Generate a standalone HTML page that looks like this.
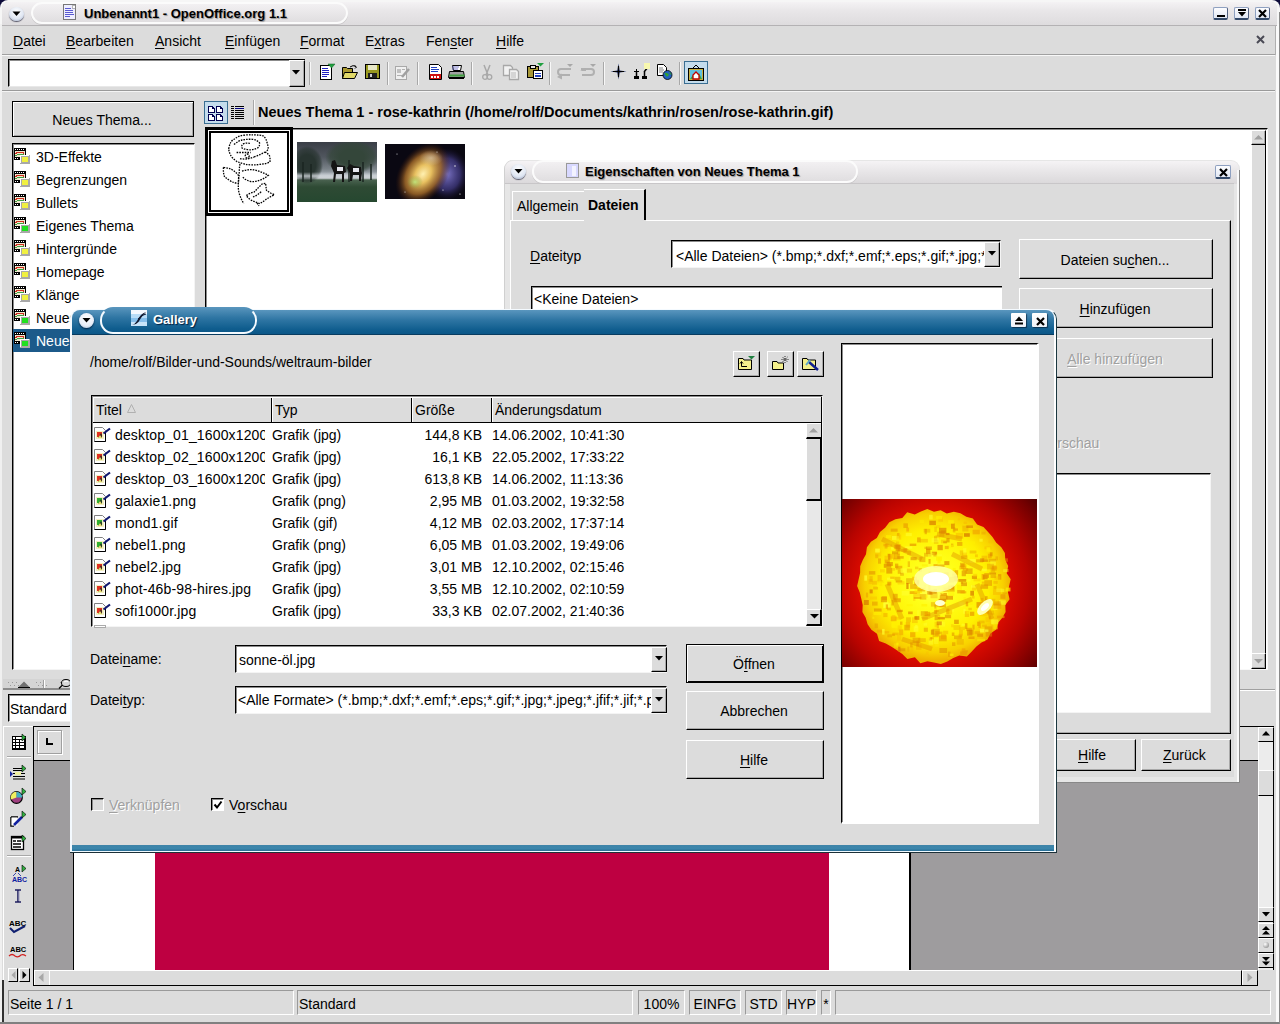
<!DOCTYPE html>
<html><head><meta charset="utf-8">
<style>
*{margin:0;padding:0;box-sizing:border-box}
html,body{width:1280px;height:1024px;overflow:hidden;background:#dcdcdc;position:relative;font-family:"Liberation Sans",sans-serif;font-size:14px;color:#000}
.a{position:absolute}
.t{position:absolute;white-space:pre}
svg{overflow:visible}
</style></head><body>
<div class="a" style="left:0px;top:0px;width:1280px;height:1024px;background:#0d0b3a"></div>
<div class="a" style="left:0px;top:0px;width:1280px;height:1024px;background:#f6f6f6;border-radius:8px 8px 0 0"></div>
<div class="a" style="left:2px;top:2px;width:1275px;height:1020px;background:#dcdcdc;border-radius:6px 6px 0 0"></div>
<div class="a" style="left:0px;top:24px;width:2px;height:1000px;background:#f0f0f0"></div>
<div class="a" style="left:1276px;top:24px;width:3px;height:1000px;background:#fafafa"></div>
<div class="a" style="left:0px;top:1022px;width:1280px;height:2px;background:#f0f0f0"></div>
<div class="a" style="left:2px;top:2px;width:1275px;height:23px;background:linear-gradient(#f4f2f4,#e8e6e8 40%,#dedcde);border-radius:6px 6px 0 0"></div>
<div class="a" style="left:2px;top:25px;width:1275px;height:1px;background:#b4b2b4"></div>
<div class="a" style="left:9px;top:7px;width:15px;height:14px;border-radius:50%;background:radial-gradient(circle at 50% 35%,#ffffff,#dfe6f2 60%,#8a9ab8);box-shadow:0 1px 1px #556"></div>
<svg class="a" style="left:11px;top:10px;;shape-rendering:auto" width="11" height="7" viewBox="0 0 11 7" shape-rendering="crispEdges"><path d="M1.5 1.5 L9.5 1.5 L5.5 6 Z" fill="#000"/></svg>
<div class="a" style="left:31px;top:2px;width:317px;height:22px;border-radius:11px;background:linear-gradient(#f2f0f2,#e0dee0);border:2px solid #fbfbfb;box-shadow:0 1px 0 #c8c6c8"></div>
<svg class="a" style="left:63px;top:4px;" width="14" height="17" viewBox="0 0 14 17" shape-rendering="crispEdges"><rect x="0.5" y="0.5" width="12" height="15" fill="#eeeeff" stroke="#777"/><rect x="9" y="1" width="3" height="3" fill="#fff" stroke="#888" stroke-width="0.6"/><path d="M2 4h6M2 6h8M2 8h8M2 10h9M2 12h5" stroke="#5a5ad0" stroke-width="1"/></svg>
<div class="t" style="left:84px;top:5.50px;font-size:13px;line-height:16px;font-weight:bold;color:#000;text-shadow:1px 1px 1px rgba(0,0,0,.35)">Unbenannt1 - OpenOffice.org 1.1</div>
<div class="a" style="left:1213px;top:7px;width:15px;height:13px;border-radius:2px;background:linear-gradient(#fdfdff,#e2e8f4);border:1px solid #8ea0c0;border-bottom:2px solid #344a6a;border-right-color:#506080"></div>
<div class="a" style="left:1217px;top:15px;width:8px;height:2px;background:#000"></div>
<div class="a" style="left:1234px;top:7px;width:15px;height:13px;border-radius:2px;background:linear-gradient(#fdfdff,#e2e8f4);border:1px solid #8ea0c0;border-bottom:2px solid #344a6a;border-right-color:#506080"></div>
<div class="a" style="left:1238px;top:9px;width:8px;height:2px;background:#000"></div>
<svg class="a" style="left:1238px;top:12px;;shape-rendering:auto" width="8" height="5" viewBox="0 0 8 5" shape-rendering="crispEdges"><path d="M0 0 L8 0 L4 4.5Z" fill="#000"/></svg>
<div class="a" style="left:1255px;top:7px;width:15px;height:13px;border-radius:2px;background:linear-gradient(#fdfdff,#e2e8f4);border:1px solid #8ea0c0;border-bottom:2px solid #344a6a;border-right-color:#506080"></div>
<svg class="a" style="left:1258px;top:9px;;shape-rendering:auto" width="9" height="9" viewBox="0 0 9 9" shape-rendering="crispEdges"><path d="M1 1 L8 8 M8 1 L1 8" stroke="#000" stroke-width="2.2"/></svg>
<div class="a" style="left:2px;top:54px;width:1273px;height:1px;background:#a0a0a0"></div>
<div class="a" style="left:2px;top:55px;width:1273px;height:1px;background:#f8f8f8"></div>
<div class="a" style="left:1275px;top:26px;width:1px;height:29px;background:#b0b0b0"></div>
<div class="t" style="left:13px;top:32.15px;font-size:14px;line-height:18px;font-weight:normal;color:#000;"><span style="text-decoration:underline;text-decoration-thickness:1px;text-underline-offset:2px">D</span>atei</div>
<div class="t" style="left:66px;top:32.15px;font-size:14px;line-height:18px;font-weight:normal;color:#000;"><span style="text-decoration:underline;text-decoration-thickness:1px;text-underline-offset:2px">B</span>earbeiten</div>
<div class="t" style="left:155px;top:32.15px;font-size:14px;line-height:18px;font-weight:normal;color:#000;"><span style="text-decoration:underline;text-decoration-thickness:1px;text-underline-offset:2px">A</span>nsicht</div>
<div class="t" style="left:225px;top:32.15px;font-size:14px;line-height:18px;font-weight:normal;color:#000;"><span style="text-decoration:underline;text-decoration-thickness:1px;text-underline-offset:2px">E</span>infügen</div>
<div class="t" style="left:300px;top:32.15px;font-size:14px;line-height:18px;font-weight:normal;color:#000;"><span style="text-decoration:underline;text-decoration-thickness:1px;text-underline-offset:2px">F</span>ormat</div>
<div class="t" style="left:365px;top:32.15px;font-size:14px;line-height:18px;font-weight:normal;color:#000;">E<span style="text-decoration:underline;text-decoration-thickness:1px;text-underline-offset:2px">x</span>tras</div>
<div class="t" style="left:426px;top:32.15px;font-size:14px;line-height:18px;font-weight:normal;color:#000;">Fen<span style="text-decoration:underline;text-decoration-thickness:1px;text-underline-offset:2px">s</span>ter</div>
<div class="t" style="left:496px;top:32.15px;font-size:14px;line-height:18px;font-weight:normal;color:#000;"><span style="text-decoration:underline;text-decoration-thickness:1px;text-underline-offset:2px">H</span>ilfe</div>
<svg class="a" style="left:1256px;top:35px;;shape-rendering:auto" width="9" height="9" viewBox="0 0 9 9" shape-rendering="crispEdges"><path d="M1 1 L8 8 M8 1 L1 8" stroke="#4a4a55" stroke-width="2"/></svg>
<div class="a" style="left:2px;top:90px;width:1273px;height:1px;background:#9a9a9a"></div>
<div class="a" style="left:2px;top:91px;width:1273px;height:1px;background:#f4f4f4"></div>
<div class="a" style="left:8px;top:59px;width:297px;height:28px;background:#fff;border-top:1px solid #000;border-left:1px solid #000;box-shadow:inset 1px 1px 0 #8c8c8c;border-bottom:1px solid #e8e8e8"></div>
<div class="a" style="left:289px;top:60px;width:16px;height:27px;background:#dcdcdc;border-left:1px solid #fff;border-top:1px solid #fff;border-right:1px solid #000;border-bottom:1px solid #000;box-shadow:inset -1px -1px 0 #a8a8a8"></div>
<svg class="a" style="left:292px;top:70px;;shape-rendering:auto" width="8" height="5" viewBox="0 0 8 5" shape-rendering="crispEdges"><path d="M0 0 L8 0 L4 4.5Z" fill="#000"/></svg>
<div class="a" style="left:309px;top:62px;width:1px;height:23px;background:#a8a8a8"></div>
<div class="a" style="left:310px;top:62px;width:1px;height:23px;background:#f8f8f8"></div>
<div class="a" style="left:387px;top:62px;width:1px;height:23px;background:#a8a8a8"></div>
<div class="a" style="left:388px;top:62px;width:1px;height:23px;background:#f8f8f8"></div>
<div class="a" style="left:417px;top:62px;width:1px;height:23px;background:#a8a8a8"></div>
<div class="a" style="left:418px;top:62px;width:1px;height:23px;background:#f8f8f8"></div>
<div class="a" style="left:471px;top:62px;width:1px;height:23px;background:#a8a8a8"></div>
<div class="a" style="left:472px;top:62px;width:1px;height:23px;background:#f8f8f8"></div>
<div class="a" style="left:549px;top:62px;width:1px;height:23px;background:#a8a8a8"></div>
<div class="a" style="left:550px;top:62px;width:1px;height:23px;background:#f8f8f8"></div>
<div class="a" style="left:603px;top:62px;width:1px;height:23px;background:#a8a8a8"></div>
<div class="a" style="left:604px;top:62px;width:1px;height:23px;background:#f8f8f8"></div>
<div class="a" style="left:679px;top:62px;width:1px;height:23px;background:#a8a8a8"></div>
<div class="a" style="left:680px;top:62px;width:1px;height:23px;background:#f8f8f8"></div>
<svg class="a" style="left:319px;top:63px;;shape-rendering:auto" width="18" height="18" viewBox="0 0 18 18" shape-rendering="crispEdges"><rect x="1.5" y="2.5" width="11" height="14" fill="#fff" stroke="#000"/><g fill="#2020c0"><rect x="3" y="5" width="6" height="1"/><rect x="3" y="7" width="7" height="1"/><rect x="3" y="9" width="7" height="1"/><rect x="3" y="11" width="7" height="1"/><rect x="3" y="13" width="5" height="1"/></g><path d="M9 1 L16 1 L12.5 5Z" fill="#20a040" stroke="#106020" stroke-width=".5"/></svg>
<svg class="a" style="left:341px;top:64px;;shape-rendering:auto" width="18" height="18" viewBox="0 0 18 18" shape-rendering="crispEdges"><path d="M1.5 3.5 L5.5 3.5 L6.5 4.5 L11.5 4.5 L11.5 14.5 L1.5 14.5Z" fill="#a89830" stroke="#000"/><path d="M3.5 8.5 L16.5 8.5 L13.5 14.5 L1.5 14.5Z" fill="#e0d868" stroke="#000"/><path d="M9 3 Q12 0.5 15 2.5" stroke="#000" fill="none"/><path d="M13.5 1.5 L15.5 3 L14 4.5" stroke="#000" fill="none"/></svg>
<svg class="a" style="left:365px;top:64px;" width="18" height="18" viewBox="0 0 18 18" shape-rendering="crispEdges"><rect x="0.5" y="0.5" width="14" height="14" fill="#989820" stroke="#000"/><rect x="3" y="1" width="9" height="5" fill="#e8e8c8"/><rect x="3" y="9" width="9" height="5" fill="#202020"/><rect x="5" y="10" width="2" height="3" fill="#d0d0d0"/></svg>
<svg class="a" style="left:394px;top:64px;;shape-rendering:auto" width="18" height="18" viewBox="0 0 18 18" shape-rendering="crispEdges"><rect x="1.5" y="2.5" width="11" height="13" fill="#f0f0f0" stroke="#a8a8a8"/><rect x="3" y="5" width="4" height="4" fill="#c0c0c0"/><rect x="8" y="5" width="3" height="1" fill="#b0b0b0"/><rect x="3" y="11" width="7" height="1" fill="#b0b0b0"/><path d="M8 13 L15 5" stroke="#a0a0a0" stroke-width="2.5"/></svg>
<svg class="a" style="left:428px;top:63px;;shape-rendering:auto" width="18" height="18" viewBox="0 0 18 18" shape-rendering="crispEdges"><path d="M1.5 1.5 L10.5 1.5 L13.5 4.5 L13.5 16.5 L1.5 16.5Z" fill="#fff" stroke="#000"/><g fill="#2040c0"><rect x="3" y="4" width="6" height="1"/><rect x="3" y="6" width="8" height="1"/><rect x="3" y="8" width="7" height="1"/></g><rect x="2" y="11" width="11" height="5" fill="#d01010"/><g fill="#fff"><rect x="3" y="13" width="2" height="2"/><rect x="6" y="13" width="2" height="2"/><rect x="9" y="13" width="2" height="2"/></g></svg>
<svg class="a" style="left:448px;top:64px;;shape-rendering:auto" width="18" height="18" viewBox="0 0 18 18" shape-rendering="crispEdges"><path d="M4.5 1.5 L13.5 1.5 L12.5 6.5 L5.5 6.5Z" fill="#fff" stroke="#000"/><path d="M4 3h7M4 5h6" stroke="#6060c0" stroke-width=".8"/><path d="M1.5 7.5 L15.5 7.5 L16.5 13.5 L0.5 13.5Z" fill="#a0a0a0" stroke="#000"/><rect x="1.5" y="10.5" width="15" height="2" fill="#40a040"/><path d="M1 14.5 H16" stroke="#000"/></svg>
<svg class="a" style="left:481px;top:64px;;shape-rendering:auto" width="18" height="18" viewBox="0 0 18 18" shape-rendering="crispEdges"><path d="M3 1 L7 11 M9 1 L5 11" stroke="#a8a8a8" stroke-width="1.5"/><circle cx="4" cy="13" r="2.3" fill="none" stroke="#a8a8a8" stroke-width="1.3"/><circle cx="8.5" cy="13" r="2.3" fill="none" stroke="#a8a8a8" stroke-width="1.3"/></svg>
<svg class="a" style="left:502px;top:64px;;shape-rendering:auto" width="18" height="18" viewBox="0 0 18 18" shape-rendering="crispEdges"><path d="M1.5 1.5 H8.5 L10.5 3.5 V11.5 H1.5Z" fill="#f2f2f2" stroke="#a8a8a8" stroke-width="1.3"/><path d="M7.5 5.5 H14.5 L16.5 7.5 V15.5 H7.5Z" fill="#f2f2f2" stroke="#a8a8a8" stroke-width="1.3"/><path d="M9 9h5M9 11h5M9 13h5" stroke="#b8b8b8"/></svg>
<svg class="a" style="left:526px;top:62px;;shape-rendering:auto" width="18" height="18" viewBox="0 0 18 18" shape-rendering="crispEdges"><rect x="1.5" y="4.5" width="11" height="11" fill="#a89838" stroke="#000"/><rect x="4.5" y="3.5" width="5" height="3" fill="#e8e8e8" stroke="#000"/><rect x="7.5" y="8.5" width="9" height="8" fill="#fff" stroke="#000"/><rect x="9" y="11" width="6" height="1" fill="#2040c0"/><rect x="9" y="13" width="6" height="2" fill="#2040c0"/><path d="M11 1 L18 1 L14.5 4.5Z" fill="#20a040"/></svg>
<svg class="a" style="left:556px;top:63px;;shape-rendering:auto" width="18" height="18" viewBox="0 0 18 18" shape-rendering="crispEdges"><path d="M15 6 L5 6 Q2 6 2 9 Q2 12 5 12 L14 12" stroke="#b0b0b0" stroke-width="2" fill="none"/><path d="M1 14 L6 10.5 L6 16.5Z" fill="#b0b0b0"/><path d="M11 1 L17 1 L14 4Z" fill="#a8a8a8"/></svg>
<svg class="a" style="left:579px;top:63px;;shape-rendering:auto" width="18" height="18" viewBox="0 0 18 18" shape-rendering="crispEdges"><path d="M2 6 L12 6 Q15 6 15 9 Q15 12 12 12 L3 12" stroke="#b0b0b0" stroke-width="2" fill="none"/><path d="M1 8 L7 8 L7 5Z" fill="#b0b0b0"/><path d="M11 1 L17 1 L14 4Z" fill="#a8a8a8"/></svg>
<svg class="a" style="left:610px;top:63px;;shape-rendering:auto" width="18" height="18" viewBox="0 0 18 18" shape-rendering="crispEdges"><path d="M8.5 0.5 L9.6 7.4 L16.5 8.5 L9.6 9.6 L8.5 16.5 L7.4 9.6 L0.5 8.5 L7.4 7.4Z" fill="#102060"/><path d="M8.5 3 V14 M3 8.5 H14" stroke="#000" stroke-width="1.2"/></svg>
<svg class="a" style="left:633px;top:63px;;shape-rendering:auto" width="18" height="18" viewBox="0 0 18 18" shape-rendering="crispEdges"><rect x="1" y="13" width="5" height="3" fill="#000"/><rect x="9" y="13" width="5" height="3" fill="#000"/><path d="M3.5 13 V9 M11.5 13 V8 M11 9 L16 3" stroke="#000" stroke-width="1.5"/><rect x="11" y="0" width="6" height="6" fill="#f8f8b0"/><path d="M1 8.5h5M3.5 6v5" stroke="#000"/></svg>
<svg class="a" style="left:656px;top:63px;;shape-rendering:auto" width="18" height="18" viewBox="0 0 18 18" shape-rendering="crispEdges"><path d="M1.5 1.5 H7.5 L10.5 4.5 V12.5 H1.5Z" fill="#fff" stroke="#000"/><path d="M3 5h4M3 7h5M3 9h4" stroke="#666" stroke-width=".8"/><circle cx="11.5" cy="12" r="4.5" fill="#2060c0" stroke="#000" stroke-width="0.8"/><path d="M8.5 10 Q11 9 13 11.5 Q12 14.5 10 13Z M13 8.5 Q15.5 10 15.5 12 L14 11Z" fill="#30a030"/></svg>
<div class="a" style="left:684px;top:61px;width:24px;height:23px;background:#c4dcec;border:1px solid #3a6e92"></div>
<svg class="a" style="left:688px;top:64px;;shape-rendering:auto" width="18" height="18" viewBox="0 0 18 18" shape-rendering="crispEdges"><rect x="0.5" y="4.5" width="15" height="12" fill="#c8b040" stroke="#000"/><rect x="2" y="6" width="12" height="9" fill="#60c0e0"/><path d="M2 15 L5 11 L8 13 L11 9 L14 15Z" fill="#40a040"/><path d="M5 15 L5 11 L8 8 L11 11 L11 15Z" fill="#fff" stroke="#c00000" stroke-width="1.3"/><path d="M5 4 L8 1 L11 4" stroke="#000" fill="none"/></svg>
<div class="a" style="left:12px;top:101px;width:182px;height:36px;background:#dcdcdc;border:1px solid #000;box-shadow:inset 1px 1px 0 #fff,inset -1px -1px 0 #a8a8a8"></div>
<div class="t" style="left:102px;top:111.15px;font-size:14px;line-height:18px;font-weight:normal;color:#000;transform:translateX(-50%);">Neues Thema...</div>
<div class="a" style="left:12px;top:143px;width:183px;height:527px;background:#fff;border-top:1px solid #000;border-left:1px solid #000;box-shadow:inset 1px 1px 0 #8c8c8c;border-bottom:1px solid #f4f4f4;border-right:1px solid #f4f4f4"></div>
<div class="t" style="left:36px;top:148.15px;font-size:14px;line-height:18px;font-weight:normal;color:#000;">3D-Effekte</div>
<svg class="a" style="left:14px;top:148px;" width="17" height="17" viewBox="0 0 17 17" shape-rendering="crispEdges"><rect x="0" y="0" width="12" height="12" fill="#000"/><g fill="#fff"><rect x="1" y="1" width="1" height="1"/><rect x="3" y="1" width="1" height="1"/><rect x="5" y="1" width="1" height="1"/><rect x="7" y="1" width="1" height="1"/><rect x="9" y="1" width="1" height="1"/><rect x="1" y="10" width="1" height="1"/><rect x="3" y="10" width="1" height="1"/></g><rect x="1" y="3" width="10" height="6" fill="#f0e8d0"/><path d="M1 6 Q5 3 10 5" stroke="#d03020" stroke-width="1.3" fill="none"/><path d="M1 8 Q5 5 10 7" stroke="#40a040" stroke-width="1" fill="none"/><rect x="6" y="7" width="10" height="9" fill="#a8a8a8"/><rect x="6" y="7" width="9" height="1" fill="#fff"/><rect x="6" y="7" width="1" height="8" fill="#fff"/><rect x="8" y="9" width="6" height="5" fill="#f0f040"/></svg>
<div class="t" style="left:36px;top:171.15px;font-size:14px;line-height:18px;font-weight:normal;color:#000;">Begrenzungen</div>
<svg class="a" style="left:14px;top:171px;" width="17" height="17" viewBox="0 0 17 17" shape-rendering="crispEdges"><rect x="0" y="0" width="12" height="12" fill="#000"/><g fill="#fff"><rect x="1" y="1" width="1" height="1"/><rect x="3" y="1" width="1" height="1"/><rect x="5" y="1" width="1" height="1"/><rect x="7" y="1" width="1" height="1"/><rect x="9" y="1" width="1" height="1"/><rect x="1" y="10" width="1" height="1"/><rect x="3" y="10" width="1" height="1"/></g><rect x="1" y="3" width="10" height="6" fill="#f0e8d0"/><path d="M1 6 Q5 3 10 5" stroke="#d03020" stroke-width="1.3" fill="none"/><path d="M1 8 Q5 5 10 7" stroke="#40a040" stroke-width="1" fill="none"/><rect x="6" y="7" width="10" height="9" fill="#a8a8a8"/><rect x="6" y="7" width="9" height="1" fill="#fff"/><rect x="6" y="7" width="1" height="8" fill="#fff"/><rect x="8" y="9" width="6" height="5" fill="#f0f040"/></svg>
<div class="t" style="left:36px;top:194.15px;font-size:14px;line-height:18px;font-weight:normal;color:#000;">Bullets</div>
<svg class="a" style="left:14px;top:194px;" width="17" height="17" viewBox="0 0 17 17" shape-rendering="crispEdges"><rect x="0" y="0" width="12" height="12" fill="#000"/><g fill="#fff"><rect x="1" y="1" width="1" height="1"/><rect x="3" y="1" width="1" height="1"/><rect x="5" y="1" width="1" height="1"/><rect x="7" y="1" width="1" height="1"/><rect x="9" y="1" width="1" height="1"/><rect x="1" y="10" width="1" height="1"/><rect x="3" y="10" width="1" height="1"/></g><rect x="1" y="3" width="10" height="6" fill="#f0e8d0"/><path d="M1 6 Q5 3 10 5" stroke="#d03020" stroke-width="1.3" fill="none"/><path d="M1 8 Q5 5 10 7" stroke="#40a040" stroke-width="1" fill="none"/><rect x="6" y="7" width="10" height="9" fill="#a8a8a8"/><rect x="6" y="7" width="9" height="1" fill="#fff"/><rect x="6" y="7" width="1" height="8" fill="#fff"/><rect x="8" y="9" width="6" height="5" fill="#f0f040"/></svg>
<div class="t" style="left:36px;top:217.15px;font-size:14px;line-height:18px;font-weight:normal;color:#000;">Eigenes Thema</div>
<svg class="a" style="left:14px;top:217px;" width="17" height="17" viewBox="0 0 17 17" shape-rendering="crispEdges"><rect x="0" y="0" width="12" height="12" fill="#000"/><g fill="#fff"><rect x="1" y="1" width="1" height="1"/><rect x="3" y="1" width="1" height="1"/><rect x="5" y="1" width="1" height="1"/><rect x="7" y="1" width="1" height="1"/><rect x="9" y="1" width="1" height="1"/><rect x="1" y="10" width="1" height="1"/><rect x="3" y="10" width="1" height="1"/></g><rect x="1" y="3" width="10" height="6" fill="#f0e8d0"/><path d="M1 6 Q5 3 10 5" stroke="#d03020" stroke-width="1.3" fill="none"/><path d="M1 8 Q5 5 10 7" stroke="#40a040" stroke-width="1" fill="none"/><rect x="6" y="7" width="10" height="9" fill="#a8a8a8"/><rect x="6" y="7" width="9" height="1" fill="#fff"/><rect x="6" y="7" width="1" height="8" fill="#fff"/><rect x="8" y="9" width="6" height="5" fill="#20e020"/></svg>
<div class="t" style="left:36px;top:240.15px;font-size:14px;line-height:18px;font-weight:normal;color:#000;">Hintergründe</div>
<svg class="a" style="left:14px;top:240px;" width="17" height="17" viewBox="0 0 17 17" shape-rendering="crispEdges"><rect x="0" y="0" width="12" height="12" fill="#000"/><g fill="#fff"><rect x="1" y="1" width="1" height="1"/><rect x="3" y="1" width="1" height="1"/><rect x="5" y="1" width="1" height="1"/><rect x="7" y="1" width="1" height="1"/><rect x="9" y="1" width="1" height="1"/><rect x="1" y="10" width="1" height="1"/><rect x="3" y="10" width="1" height="1"/></g><rect x="1" y="3" width="10" height="6" fill="#f0e8d0"/><path d="M1 6 Q5 3 10 5" stroke="#d03020" stroke-width="1.3" fill="none"/><path d="M1 8 Q5 5 10 7" stroke="#40a040" stroke-width="1" fill="none"/><rect x="6" y="7" width="10" height="9" fill="#a8a8a8"/><rect x="6" y="7" width="9" height="1" fill="#fff"/><rect x="6" y="7" width="1" height="8" fill="#fff"/><rect x="8" y="9" width="6" height="5" fill="#f0f040"/></svg>
<div class="t" style="left:36px;top:263.15px;font-size:14px;line-height:18px;font-weight:normal;color:#000;">Homepage</div>
<svg class="a" style="left:14px;top:263px;" width="17" height="17" viewBox="0 0 17 17" shape-rendering="crispEdges"><rect x="0" y="0" width="12" height="12" fill="#000"/><g fill="#fff"><rect x="1" y="1" width="1" height="1"/><rect x="3" y="1" width="1" height="1"/><rect x="5" y="1" width="1" height="1"/><rect x="7" y="1" width="1" height="1"/><rect x="9" y="1" width="1" height="1"/><rect x="1" y="10" width="1" height="1"/><rect x="3" y="10" width="1" height="1"/></g><rect x="1" y="3" width="10" height="6" fill="#f0e8d0"/><path d="M1 6 Q5 3 10 5" stroke="#d03020" stroke-width="1.3" fill="none"/><path d="M1 8 Q5 5 10 7" stroke="#40a040" stroke-width="1" fill="none"/><rect x="6" y="7" width="10" height="9" fill="#a8a8a8"/><rect x="6" y="7" width="9" height="1" fill="#fff"/><rect x="6" y="7" width="1" height="8" fill="#fff"/><rect x="8" y="9" width="6" height="5" fill="#f0f040"/></svg>
<div class="t" style="left:36px;top:286.15px;font-size:14px;line-height:18px;font-weight:normal;color:#000;">Klänge</div>
<svg class="a" style="left:14px;top:286px;" width="17" height="17" viewBox="0 0 17 17" shape-rendering="crispEdges"><rect x="0" y="0" width="12" height="12" fill="#000"/><g fill="#fff"><rect x="1" y="1" width="1" height="1"/><rect x="3" y="1" width="1" height="1"/><rect x="5" y="1" width="1" height="1"/><rect x="7" y="1" width="1" height="1"/><rect x="9" y="1" width="1" height="1"/><rect x="1" y="10" width="1" height="1"/><rect x="3" y="10" width="1" height="1"/></g><rect x="1" y="3" width="10" height="6" fill="#f0e8d0"/><path d="M1 6 Q5 3 10 5" stroke="#d03020" stroke-width="1.3" fill="none"/><path d="M1 8 Q5 5 10 7" stroke="#40a040" stroke-width="1" fill="none"/><rect x="6" y="7" width="10" height="9" fill="#a8a8a8"/><rect x="6" y="7" width="9" height="1" fill="#fff"/><rect x="6" y="7" width="1" height="8" fill="#fff"/><rect x="8" y="9" width="6" height="5" fill="#f0f040"/></svg>
<div class="t" style="left:36px;top:309.15px;font-size:14px;line-height:18px;font-weight:normal;color:#000;">Neues Thema</div>
<svg class="a" style="left:14px;top:309px;" width="17" height="17" viewBox="0 0 17 17" shape-rendering="crispEdges"><rect x="0" y="0" width="12" height="12" fill="#000"/><g fill="#fff"><rect x="1" y="1" width="1" height="1"/><rect x="3" y="1" width="1" height="1"/><rect x="5" y="1" width="1" height="1"/><rect x="7" y="1" width="1" height="1"/><rect x="9" y="1" width="1" height="1"/><rect x="1" y="10" width="1" height="1"/><rect x="3" y="10" width="1" height="1"/></g><rect x="1" y="3" width="10" height="6" fill="#f0e8d0"/><path d="M1 6 Q5 3 10 5" stroke="#d03020" stroke-width="1.3" fill="none"/><path d="M1 8 Q5 5 10 7" stroke="#40a040" stroke-width="1" fill="none"/><rect x="6" y="7" width="10" height="9" fill="#a8a8a8"/><rect x="6" y="7" width="9" height="1" fill="#fff"/><rect x="6" y="7" width="1" height="8" fill="#fff"/><rect x="8" y="9" width="6" height="5" fill="#20e020"/></svg>
<div class="a" style="left:13px;top:329px;width:57px;height:23px;background:#1c5a8a"></div>
<div class="t" style="left:36px;top:332.15px;font-size:14px;line-height:18px;font-weight:normal;color:#fff;">Neues Thema 1</div>
<svg class="a" style="left:14px;top:332px;" width="17" height="17" viewBox="0 0 17 17" shape-rendering="crispEdges"><rect x="0" y="0" width="12" height="12" fill="#000"/><g fill="#fff"><rect x="1" y="1" width="1" height="1"/><rect x="3" y="1" width="1" height="1"/><rect x="5" y="1" width="1" height="1"/><rect x="7" y="1" width="1" height="1"/><rect x="9" y="1" width="1" height="1"/><rect x="1" y="10" width="1" height="1"/><rect x="3" y="10" width="1" height="1"/></g><rect x="1" y="3" width="10" height="6" fill="#f0e8d0"/><path d="M1 6 Q5 3 10 5" stroke="#d03020" stroke-width="1.3" fill="none"/><path d="M1 8 Q5 5 10 7" stroke="#40a040" stroke-width="1" fill="none"/><rect x="6" y="7" width="10" height="9" fill="#a8a8a8"/><rect x="6" y="7" width="9" height="1" fill="#fff"/><rect x="6" y="7" width="1" height="8" fill="#fff"/><rect x="8" y="9" width="6" height="5" fill="#20e020"/></svg>
<div class="a" style="left:204px;top:101px;width:24px;height:23px;background:#c4dcec;border:1px solid #3a6e92"></div>
<svg class="a" style="left:207px;top:105px;" width="17" height="16" viewBox="0 0 17 16" shape-rendering="crispEdges"><path d="M1.5 1.5 H5.5 L7.5 3.5 V7.5 H1.5 Z" fill="#fff" stroke="#000050"/><path d="M5.5 1.5 V3.5 H7.5" fill="none" stroke="#000050"/><path d="M9.5 1.5 H13.5 L15.5 3.5 V7.5 H9.5 Z" fill="#fff" stroke="#000050"/><path d="M13.5 1.5 V3.5 H15.5" fill="none" stroke="#000050"/><path d="M1.5 9.5 H5.5 L7.5 11.5 V15.5 H1.5 Z" fill="#fff" stroke="#000050"/><path d="M5.5 9.5 V11.5 H7.5" fill="none" stroke="#000050"/><path d="M9.5 9.5 H13.5 L15.5 11.5 V15.5 H9.5 Z" fill="#fff" stroke="#000050"/><path d="M13.5 9.5 V11.5 H15.5" fill="none" stroke="#000050"/></svg>
<svg class="a" style="left:230px;top:105px;" width="15" height="15" viewBox="0 0 15 15" shape-rendering="crispEdges"><rect x="1" y="1" width="3" height="1" fill="#000"/><rect x="5" y="1" width="9" height="1" fill="#000"/><rect x="1" y="3" width="3" height="1" fill="#000"/><rect x="5" y="3" width="9" height="1" fill="#000080"/><rect x="1" y="5" width="3" height="1" fill="#000"/><rect x="5" y="5" width="9" height="1" fill="#000"/><rect x="1" y="7" width="3" height="1" fill="#000"/><rect x="5" y="7" width="9" height="1" fill="#000"/><rect x="1" y="9" width="3" height="1" fill="#000"/><rect x="5" y="9" width="9" height="1" fill="#000"/><rect x="1" y="11" width="3" height="1" fill="#000"/><rect x="5" y="11" width="9" height="1" fill="#000"/><rect x="1" y="13" width="3" height="1" fill="#000"/><rect x="5" y="13" width="9" height="1" fill="#000"/></svg>
<div class="a" style="left:253px;top:100px;width:1px;height:25px;background:#a8a8a8"></div>
<div class="a" style="left:254px;top:100px;width:1px;height:25px;background:#fafafa"></div>
<div class="t" style="left:258px;top:102.98px;font-size:14.5px;line-height:18px;font-weight:bold;color:#000;">Neues Thema 1 - rose-kathrin (/home/rolf/Documents/kathrin/rosen/rose-kathrin.gif)</div>
<div class="a" style="left:205px;top:128px;width:1063px;height:542px;background:#fff;border-top:1px solid #000;border-left:1px solid #000;box-shadow:inset 1px 1px 0 #8c8c8c;border-bottom:1px solid #f8f8f8;border-right:1px solid #f8f8f8"></div>
<div class="a" style="left:1251px;top:130px;width:15px;height:539px;background:#dcdcdc;border-left:1px solid #fff;border-right:1px solid #000"></div>
<div class="a" style="left:1251px;top:130px;width:15px;height:15px;background:#dcdcdc;border-top:1px solid #fff;border-left:1px solid #fff;border-bottom:1px solid #000;border-right:1px solid #000;box-shadow:inset -1px -1px 0 #a8a8a8"></div>
<svg class="a" style="left:1254px;top:135px;;shape-rendering:auto" width="9" height="5" viewBox="0 0 9 5" shape-rendering="crispEdges"><path d="M0 4.5 L9 4.5 L4.5 0Z" fill="#a0a0a0"/></svg>
<div class="a" style="left:1251px;top:653px;width:15px;height:16px;background:#dcdcdc;border-top:1px solid #fff;border-left:1px solid #fff;border-bottom:1px solid #000;border-right:1px solid #000;box-shadow:inset -1px -1px 0 #a8a8a8"></div>
<svg class="a" style="left:1254px;top:659px;;shape-rendering:auto" width="9" height="5" viewBox="0 0 9 5" shape-rendering="crispEdges"><path d="M0 0 L9 0 L4.5 4.5Z" fill="#a0a0a0"/></svg>
<div class="a" style="left:205px;top:127px;width:88px;height:89px;border:3px solid #000;background:#fff"></div>
<div class="a" style="left:209px;top:131px;width:80px;height:81px;border:2px solid #000;background:#fff"></div>
<svg class="a" style="left:205px;top:127px;;shape-rendering:auto" width="90" height="90" viewBox="0 0 90 90" shape-rendering="crispEdges"><g fill="none" stroke="#000" stroke-width="1.3" stroke-dasharray="1.6 1.1"><path d="M23.7 22 Q25 14 29 12.3 Q33 9 37.8 8.3 Q44 7.5 49 7.9 Q55 8 58 8.8 Q61 11 61.5 14 Q63 18 63.3 22 L60.6 25.5 Q64 27 65 30 L65 35 Q61 37 57 37 Q52 38 47.5 37.8 Q43 38 39.5 37 Q35 36 31.6 34.3 Q27 31 25.5 28 Q24 25 23.7 22Z"/><path d="M29 17.6 Q33 14 37 13 Q42 12 47.5 12.3 Q52 13 54.5 15.8 Q55 19 52.7 21 Q48 23 44 22.8 Q40 22.5 37 21 Q36 18 38.7 16.7 Q42 15.5 45.7 16.7"/><path d="M31.6 25.5 L45.7 25.5 M35 31.6 Q42 33 49 30 M49 30 Q55 28 60 25"/><circle cx="42.2" cy="29" r="2"/><path d="M18.5 40.4 Q23 41 26.4 42.2 Q31 45 33.4 48.3 Q34 53 33.4 56.2 Q29 56 26.4 54.5 Q22 52 19.3 49.2 Q18 45 18.5 40.4Z"/><path d="M37 44 Q44 42 50 43 Q57 45 63.3 48.3 Q60 51 56.2 52.7 Q51 55 45.7 54.5 Q40 53 37.8 50"/><path d="M35 37 Q34 42 34.3 47.5 Q33 53 33.4 58 Q33 62 34.3 66.8 Q36 72 38.7 76.5"/><path d="M41.3 68.5 Q45 66 49.2 65 Q53 61 57 57 L60.6 56.2 Q61 60 61.5 63.3 Q65 66 69.4 67.7 Q65 70 61.5 72 Q58 75 54.5 76.5 Q50 75 45.7 73 Q43 71 41.3 68.5Z"/><path d="M48 70 Q53 68 57 64 M52 76 L54 79"/></g></svg>
<div class="a" style="left:3px;top:679px;width:69px;height:9px;background:#d4d4d4"></div>
<div class="a" style="left:3px;top:688px;width:69px;height:2px;background:#8c8c8c"></div>
<div class="a" style="left:72px;top:689px;width:1203px;height:1px;background:#a0a0a0"></div>
<div class="a" style="left:72px;top:690px;width:1203px;height:1px;background:#fff"></div>
<svg class="a" style="left:8px;top:682px;" width="14" height="5" viewBox="0 0 14 5" shape-rendering="crispEdges"><g fill="#9a9a9a"><rect x="0" y="0" width="1" height="1"/><rect x="4" y="0" width="1" height="1"/><rect x="8" y="0" width="1" height="1"/><rect x="2" y="3" width="1" height="1"/><rect x="6" y="3" width="1" height="1"/><rect x="10" y="3" width="1" height="1"/></g></svg>
<svg class="a" style="left:36px;top:682px;" width="14" height="5" viewBox="0 0 14 5" shape-rendering="crispEdges"><g fill="#9a9a9a"><rect x="0" y="0" width="1" height="1"/><rect x="4" y="0" width="1" height="1"/><rect x="8" y="0" width="1" height="1"/><rect x="2" y="3" width="1" height="1"/><rect x="6" y="3" width="1" height="1"/><rect x="10" y="3" width="1" height="1"/></g></svg>
<svg class="a" style="left:60px;top:682px;" width="14" height="5" viewBox="0 0 14 5" shape-rendering="crispEdges"><g fill="#9a9a9a"><rect x="0" y="0" width="1" height="1"/><rect x="4" y="0" width="1" height="1"/><rect x="8" y="0" width="1" height="1"/><rect x="2" y="3" width="1" height="1"/><rect x="6" y="3" width="1" height="1"/><rect x="10" y="3" width="1" height="1"/></g></svg>
<svg class="a" style="left:18px;top:681px;;shape-rendering:auto" width="12" height="7" viewBox="0 0 12 7" shape-rendering="crispEdges"><path d="M0 6.5 L12 6.5 L6 0.5Z" fill="#707070"/><path d="M0 6.5 L12 6.5" stroke="#000"/></svg>
<div class="a" style="left:43px;top:680px;width:1px;height:8px;background:#a0a0a0"></div>
<div class="a" style="left:44px;top:680px;width:1px;height:8px;background:#fff"></div>
<svg class="a" style="left:58px;top:679px;;shape-rendering:auto" width="13" height="10" viewBox="0 0 13 10" shape-rendering="crispEdges"><ellipse cx="8" cy="4" rx="4.5" ry="3.5" fill="#d8d8d8" stroke="#000" stroke-width="1"/><path d="M4.5 6 L1 9.5" stroke="#000" stroke-width="1.2"/><path d="M6 3 Q8 1.5 10 2.5" stroke="#fff" stroke-width="1" fill="none"/></svg>
<div class="a" style="left:8px;top:694px;width:80px;height:28px;background:#fff;border-top:1px solid #000;border-left:1px solid #000;box-shadow:inset 1px 1px 0 #8c8c8c;border-bottom:1px solid #eee"></div>
<div class="t" style="left:10px;top:700.15px;font-size:14px;line-height:18px;font-weight:normal;color:#000;">Standard</div>
<div class="a" style="left:3px;top:726px;width:30px;height:262px;background:#dcdcdc;border-top:1px solid #fff;border-left:1px solid #fff"></div>
<div class="a" style="left:7px;top:756px;width:24px;height:1px;background:#a8a8a8"></div>
<div class="a" style="left:7px;top:757px;width:24px;height:1px;background:#fff"></div>
<div class="a" style="left:7px;top:855px;width:24px;height:1px;background:#a8a8a8"></div>
<div class="a" style="left:7px;top:856px;width:24px;height:1px;background:#fff"></div>
<div class="a" style="left:33px;top:726px;width:1px;height:260px;background:#000"></div>
<div class="a" style="left:33px;top:726px;width:1241px;height:1px;background:#000"></div>
<div class="a" style="left:34px;top:727px;width:1224px;height:33px;background:#dcdcdc"></div>
<div class="a" style="left:37px;top:730px;width:25px;height:24px;border:1px solid #a0a0a0;box-shadow:inset 1px 1px 0 #fff,1px 1px 0 #fff;background:#dcdcdc"></div>
<svg class="a" style="left:46px;top:738px;" width="8" height="7" viewBox="0 0 8 7" shape-rendering="crispEdges"><path d="M1 0 V5.5 H7" stroke="#000" stroke-width="2" fill="none"/></svg>
<div class="a" style="left:33px;top:760px;width:1225px;height:1px;background:#000"></div>
<div class="a" style="left:34px;top:761px;width:1224px;height:209px;background:#9e9c9e"></div>
<div class="a" style="left:74px;top:761px;width:836px;height:209px;background:#fff"></div>
<div class="a" style="left:73px;top:761px;width:1px;height:209px;background:#000"></div>
<div class="a" style="left:155px;top:761px;width:674px;height:209px;background:#be0041"></div>
<div class="a" style="left:909px;top:761px;width:2px;height:209px;background:#000"></div>
<div class="a" style="left:34px;top:970px;width:1224px;height:15px;background:#e8e8e8"></div>
<div class="a" style="left:34px;top:970px;width:16px;height:15px;background:#dcdcdc;border-top:1px solid #fff;border-left:1px solid #fff;border-right:1px solid #000"></div>
<svg class="a" style="left:38px;top:973px;;shape-rendering:auto" width="6" height="9" viewBox="0 0 6 9" shape-rendering="crispEdges"><path d="M5.5 0 L5.5 9 L0.5 4.5Z" fill="#a8a8a8"/></svg>
<div class="a" style="left:49px;top:970px;width:1193px;height:15px;background:#dcdcdc;border-top:1px solid #fff;border-left:1px solid #fff"></div>
<div class="a" style="left:1241px;top:970px;width:17px;height:15px;background:#dcdcdc;border-top:1px solid #fff;border-left:1px solid #000;border-right:1px solid #000;box-shadow:inset 1px 0 0 #fff"></div>
<svg class="a" style="left:1247px;top:973px;;shape-rendering:auto" width="6" height="9" viewBox="0 0 6 9" shape-rendering="crispEdges"><path d="M0.5 0 L0.5 9 L5.5 4.5Z" fill="#a8a8a8"/></svg>
<div class="a" style="left:33px;top:985px;width:1225px;height:1px;background:#000"></div>
<div class="a" style="left:8px;top:968px;width:10px;height:14px;background:#dcdcdc;border-top:1px solid #fff;border-left:1px solid #fff;border-right:1px solid #000;border-bottom:1px solid #000"></div>
<div class="a" style="left:19px;top:968px;width:11px;height:14px;background:#dcdcdc;border-top:1px solid #fff;border-left:1px solid #fff;border-right:1px solid #000;border-bottom:1px solid #000"></div>
<svg class="a" style="left:11px;top:971px;;shape-rendering:auto" width="5" height="8" viewBox="0 0 5 8" shape-rendering="crispEdges"><path d="M4.5 0 L4.5 8 L0.5 4Z" fill="#a8a8a8"/></svg>
<svg class="a" style="left:22px;top:971px;;shape-rendering:auto" width="5" height="8" viewBox="0 0 5 8" shape-rendering="crispEdges"><path d="M0.5 0 L0.5 8 L4.5 4Z" fill="#000"/></svg>
<div class="a" style="left:1258px;top:727px;width:16px;height:243px;background:#ececec;border-left:1px solid #fff"></div>
<div class="a" style="left:1273px;top:727px;width:1px;height:243px;background:#000"></div>
<div class="a" style="left:1258px;top:727px;width:16px;height:15px;background:#dcdcdc;border-top:1px solid #fff;border-left:1px solid #fff;border-right:1px solid #000;border-bottom:1px solid #000"></div>
<svg class="a" style="left:1262px;top:731px;;shape-rendering:auto" width="8" height="5" viewBox="0 0 8 5" shape-rendering="crispEdges"><path d="M0 4.5 L8 4.5 L4 0Z" fill="#000"/></svg>
<div class="a" style="left:1258px;top:770px;width:16px;height:26px;background:#dcdcdc;border-top:1px solid #fff;border-left:1px solid #fff;border-right:1px solid #000;border-bottom:1px solid #000"></div>
<div class="a" style="left:1258px;top:907px;width:16px;height:15px;background:#dcdcdc;border-top:1px solid #fff;border-left:1px solid #fff;border-right:1px solid #000;border-bottom:1px solid #000"></div>
<svg class="a" style="left:1262px;top:912px;;shape-rendering:auto" width="8" height="5" viewBox="0 0 8 5" shape-rendering="crispEdges"><path d="M0 0 L8 0 L4 4.5Z" fill="#000"/></svg>
<div class="a" style="left:1258px;top:923px;width:16px;height:15px;background:#dcdcdc;border-top:1px solid #fff;border-left:1px solid #fff;border-right:1px solid #000;border-bottom:1px solid #000"></div>
<svg class="a" style="left:1262px;top:926px;;shape-rendering:auto" width="8" height="9" viewBox="0 0 8 9" shape-rendering="crispEdges"><path d="M0 4 L8 4 L4 0Z M0 8.5 L8 8.5 L4 4.5Z" fill="#000"/></svg>
<div class="a" style="left:1258px;top:938px;width:16px;height:15px;background:#dcdcdc;border-top:1px solid #fff;border-left:1px solid #fff;border-right:1px solid #000;border-bottom:1px solid #000"></div>
<div class="a" style="left:1263px;top:942px;width:6px;height:6px;border-radius:50%;background:radial-gradient(circle at 35% 35%,#fff,#777)"></div>
<div class="a" style="left:1258px;top:953px;width:16px;height:15px;background:#dcdcdc;border-top:1px solid #fff;border-left:1px solid #fff;border-right:1px solid #000;border-bottom:1px solid #000"></div>
<svg class="a" style="left:1262px;top:957px;;shape-rendering:auto" width="8" height="9" viewBox="0 0 8 9" shape-rendering="crispEdges"><path d="M0 0 L8 0 L4 4Z M0 4.5 L8 4.5 L4 8.5Z" fill="#000"/></svg>
<div class="a" style="left:1258px;top:970px;width:16px;height:16px;background:#dcdcdc"></div>
<div class="a" style="left:3px;top:987px;width:1272px;height:3px;background:#dcdcdc"></div>
<div class="a" style="left:8px;top:990px;width:286px;height:25px;background:#dcdcdc;border-top:1px solid #9a9a9a;border-left:1px solid #9a9a9a;border-bottom:1px solid #fff;border-right:1px solid #fff"></div>
<div class="t" style="left:10px;top:995.15px;font-size:14px;line-height:18px;font-weight:normal;color:#000;">Seite 1 / 1</div>
<div class="a" style="left:297px;top:990px;width:336px;height:25px;background:#dcdcdc;border-top:1px solid #9a9a9a;border-left:1px solid #9a9a9a;border-bottom:1px solid #fff;border-right:1px solid #fff"></div>
<div class="t" style="left:299px;top:995.15px;font-size:14px;line-height:18px;font-weight:normal;color:#000;">Standard</div>
<div class="a" style="left:638px;top:990px;width:47px;height:25px;background:#dcdcdc;border-top:1px solid #9a9a9a;border-left:1px solid #9a9a9a;border-bottom:1px solid #fff;border-right:1px solid #fff"></div>
<div class="t" style="left:661.5px;top:995.15px;font-size:14px;line-height:18px;font-weight:normal;color:#000;transform:translateX(-50%);">100%</div>
<div class="a" style="left:689px;top:990px;width:52px;height:25px;background:#dcdcdc;border-top:1px solid #9a9a9a;border-left:1px solid #9a9a9a;border-bottom:1px solid #fff;border-right:1px solid #fff"></div>
<div class="t" style="left:715.0px;top:995.15px;font-size:14px;line-height:18px;font-weight:normal;color:#000;transform:translateX(-50%);">EINFG</div>
<div class="a" style="left:745px;top:990px;width:37px;height:25px;background:#dcdcdc;border-top:1px solid #9a9a9a;border-left:1px solid #9a9a9a;border-bottom:1px solid #fff;border-right:1px solid #fff"></div>
<div class="t" style="left:763.5px;top:995.15px;font-size:14px;line-height:18px;font-weight:normal;color:#000;transform:translateX(-50%);">STD</div>
<div class="a" style="left:786px;top:990px;width:31px;height:25px;background:#dcdcdc;border-top:1px solid #9a9a9a;border-left:1px solid #9a9a9a;border-bottom:1px solid #fff;border-right:1px solid #fff"></div>
<div class="t" style="left:801.5px;top:995.15px;font-size:14px;line-height:18px;font-weight:normal;color:#000;transform:translateX(-50%);">HYP</div>
<div class="a" style="left:821px;top:990px;width:10px;height:25px;background:#dcdcdc;border-top:1px solid #9a9a9a;border-left:1px solid #9a9a9a;border-bottom:1px solid #fff;border-right:1px solid #fff"></div>
<div class="t" style="left:826.0px;top:995.15px;font-size:14px;line-height:18px;font-weight:normal;color:#000;transform:translateX(-50%);">*</div>
<div class="a" style="left:835px;top:990px;width:436px;height:25px;background:#dcdcdc;border-top:1px solid #9a9a9a;border-left:1px solid #9a9a9a;border-bottom:1px solid #fff;border-right:1px solid #fff"></div>
<div class="a" style="left:0px;top:1022px;width:1280px;height:2px;background:#808080"></div>
<div class="a" style="left:1279px;top:12px;width:1px;height:1012px;background:#8a8a8a"></div>
<div class="a" style="left:2px;top:980px;width:2px;height:42px;background:#303030"></div>
<div class="a" style="left:504px;top:160px;width:736px;height:623px;background:#e6e6e6;border-radius:9px 9px 0 0;border-left:1px solid #d0d0d0"></div>
<div class="a" style="left:505px;top:161px;width:734px;height:23px;background:linear-gradient(#f5f3f5,#e8e6e8 45%,#dad8da);border-radius:8px 8px 0 0"></div>
<div class="a" style="left:505px;top:183px;width:729px;height:1px;background:#c8c6c8"></div>
<div class="a" style="left:510px;top:184px;width:724px;height:593px;background:#dcdcdc"></div>
<div class="a" style="left:1237px;top:170px;width:2px;height:613px;background:#fafafa"></div>
<div class="a" style="left:1239px;top:170px;width:1px;height:613px;background:#888"></div>
<div class="a" style="left:504px;top:782px;width:736px;height:1px;background:#888"></div>
<div class="a" style="left:511px;top:164px;width:15px;height:15px;border-radius:50%;background:radial-gradient(circle at 50% 35%,#ffffff,#dfe6f2 60%,#8a9ab8);box-shadow:0 1px 1px #556"></div>
<svg class="a" style="left:514px;top:169px;;shape-rendering:auto" width="9" height="5" viewBox="0 0 9 5" shape-rendering="crispEdges"><path d="M0.5 0 L8.5 0 L4.5 4.5Z" fill="#000"/></svg>
<div class="a" style="left:532px;top:160px;width:326px;height:23px;border-radius:11px;background:linear-gradient(#f2f0f2,#e0dee0);border:2px solid #fbfbfb;box-shadow:0 1px 0 #c8c6c8"></div>
<svg class="a" style="left:566px;top:163px;;shape-rendering:auto" width="14" height="16" viewBox="0 0 14 16" shape-rendering="crispEdges"><rect x="0.5" y="0.5" width="12" height="14" fill="#d8d8ff" stroke="#999"/><rect x="6" y="3" width="4" height="10" fill="#fff" opacity=".7"/></svg>
<div class="t" style="left:585px;top:163.50px;font-size:13px;line-height:16px;font-weight:bold;color:#000;text-shadow:1px 1px 1px rgba(0,0,0,.35)">Eigenschaften von Neues Thema 1</div>
<div class="a" style="left:1215px;top:165px;width:16px;height:14px;border-radius:2px;background:linear-gradient(#fdfdff,#e2e8f4);border:1px solid #8ea0c0;border-bottom:2px solid #344a6a"></div>
<svg class="a" style="left:1219px;top:168px;;shape-rendering:auto" width="9" height="9" viewBox="0 0 9 9" shape-rendering="crispEdges"><path d="M1 1 L8 8 M8 1 L1 8" stroke="#000" stroke-width="2.2"/></svg>
<div class="a" style="left:512px;top:191px;width:72px;height:30px;background:#dcdcdc;border-top:1px solid #fff;border-left:1px solid #fff"></div>
<div class="t" style="left:517px;top:197.15px;font-size:14px;line-height:18px;font-weight:normal;color:#000;">Allgemein</div>
<div class="a" style="left:584px;top:189px;width:62px;height:32px;background:#dcdcdc;border-top:1px solid #fff;border-right:2px solid #000"></div>
<div class="t" style="left:588px;top:196.15px;font-size:14px;line-height:18px;font-weight:bold;color:#000;">Dateien</div>
<div class="a" style="left:510px;top:220px;width:721px;height:514px;border-top:1px solid #fff;border-left:1px solid #fff;border-right:1px solid #000;border-bottom:1px solid #000;box-shadow:inset -1px -1px 0 #a8a8a8"></div>
<div class="a" style="left:584px;top:220px;width:62px;height:1px;background:#dcdcdc"></div>
<div class="t" style="left:530px;top:247.15px;font-size:14px;line-height:18px;font-weight:normal;color:#000;"><span style="text-decoration:underline;text-underline-offset:2px">D</span>ateityp</div>
<div class="a" style="left:671px;top:240px;width:330px;height:28px;background:#fff;border-top:1px solid #000;border-left:1px solid #000;box-shadow:inset 1px 1px 0 #8c8c8c;border-bottom:1px solid #f4f4f4;border-right:1px solid #f4f4f4"></div>
<div class="a" style="left:673px;top:242px;width:311px;height:24px;overflow:hidden">
<div class="t" style="left:3px;top:5.15px;font-size:14px;line-height:18px;font-weight:normal;color:#000;">&lt;Alle Dateien&gt; (*.bmp;*.dxf;*.emf;*.eps;*.gif;*.jpg;*.jpeg;*.jfif</div>
</div>
<div class="a" style="left:984px;top:242px;width:16px;height:25px;background:#dcdcdc;border-top:1px solid #fff;border-left:1px solid #fff;border-right:1px solid #000;border-bottom:1px solid #000;box-shadow:inset -1px -1px 0 #a8a8a8"></div>
<svg class="a" style="left:988px;top:251px;;shape-rendering:auto" width="8" height="5" viewBox="0 0 8 5" shape-rendering="crispEdges"><path d="M0 0 L8 0 L4 4.5Z" fill="#000"/></svg>
<div class="a" style="left:531px;top:286px;width:471px;height:30px;background:#fff;border-top:1px solid #000;border-left:1px solid #000;box-shadow:inset 1px 1px 0 #8c8c8c"></div>
<div class="t" style="left:534px;top:290.15px;font-size:14px;line-height:18px;font-weight:normal;color:#000;">&lt;Keine Dateien&gt;</div>
<div class="a" style="left:1019px;top:239px;width:194px;height:40px;background:#dcdcdc;border-top:1px solid #fff;border-left:1px solid #fff;border-right:1px solid #000;border-bottom:1px solid #000;box-shadow:inset -1px -1px 0 #a8a8a8;"></div>
<div class="t" style="left:1115px;top:251.15px;font-size:14px;line-height:18px;font-weight:normal;color:#000;transform:translateX(-50%);">Dateien su<span style="text-decoration:underline;text-underline-offset:2px">c</span>hen...</div>
<div class="a" style="left:1019px;top:288px;width:194px;height:40px;background:#dcdcdc;border-top:1px solid #fff;border-left:1px solid #fff;border-right:1px solid #000;border-bottom:1px solid #000;box-shadow:inset -1px -1px 0 #a8a8a8;"></div>
<div class="t" style="left:1115px;top:300.15px;font-size:14px;line-height:18px;font-weight:normal;color:#000;transform:translateX(-50%);"><span style="text-decoration:underline;text-underline-offset:2px">H</span>inzufügen</div>
<div class="a" style="left:1019px;top:338px;width:194px;height:40px;background:#dcdcdc;border-top:1px solid #fff;border-left:1px solid #fff;border-right:1px solid #000;border-bottom:1px solid #000;box-shadow:inset -1px -1px 0 #a8a8a8;"></div>
<div class="t" style="left:1115px;top:350.15px;font-size:14px;line-height:18px;font-weight:normal;color:#a0a0a0;transform:translateX(-50%);text-shadow:1px 1px 0 #fff"><span style="text-decoration:underline;text-underline-offset:2px">A</span>lle hinzufügen</div>
<div class="t" style="left:1041px;top:434.15px;font-size:14px;line-height:18px;font-weight:normal;color:#a0a0a0;text-shadow:1px 1px 0 #fff">Vorschau</div>
<div class="a" style="left:1020px;top:473px;width:191px;height:240px;background:#fff;border-top:1px solid #000;border-left:1px solid #000;box-shadow:inset 1px 1px 0 #8c8c8c;border-bottom:1px solid #f4f4f4;border-right:1px solid #f4f4f4"></div>
<div class="a" style="left:1040px;top:739px;width:96px;height:32px;background:#dcdcdc;border-top:1px solid #fff;border-left:1px solid #fff;border-right:1px solid #000;border-bottom:1px solid #000;box-shadow:inset -1px -1px 0 #a8a8a8;"></div>
<div class="t" style="left:1078px;top:746.15px;font-size:14px;line-height:18px;font-weight:normal;color:#000;"><span style="text-decoration:underline;text-underline-offset:2px">H</span>ilfe</div>
<div class="a" style="left:1141px;top:739px;width:90px;height:32px;background:#dcdcdc;border-top:1px solid #fff;border-left:1px solid #fff;border-right:1px solid #000;border-bottom:1px solid #000;box-shadow:inset -1px -1px 0 #a8a8a8;"></div>
<div class="t" style="left:1163px;top:746.15px;font-size:14px;line-height:18px;font-weight:normal;color:#000;"><span style="text-decoration:underline;text-underline-offset:2px">Z</span>urück</div>
<div class="a" style="left:70px;top:309px;width:987px;height:544px;background:#f4faff;border-radius:9px 9px 0 0"></div>
<div class="a" style="left:72px;top:310px;width:982px;height:25px;background:linear-gradient(#5a96be,#2e75a3 40%,#0f5d8e 80%,#0a5586);border-radius:8px 8px 0 0"></div>
<div class="a" style="left:72px;top:334px;width:982px;height:1px;background:#083c60"></div>
<div class="a" style="left:72px;top:335px;width:982px;height:511px;background:#dcdcdc"></div>
<div class="a" style="left:1045px;top:309px;width:12px;height:20px;border-top-right-radius:10px;border-right:1px solid #1c3840;border-top:1px solid transparent"></div>
<div class="a" style="left:1056px;top:321px;width:1px;height:532px;background:#1c3840"></div>
<div class="a" style="left:1054px;top:335px;width:2px;height:517px;background:#fff"></div>
<div class="a" style="left:72px;top:845px;width:982px;height:6px;background:linear-gradient(#3f84a8,#3a86ac 60%,#2a6e96)"></div>
<div class="a" style="left:70px;top:851px;width:986px;height:1px;background:#f0faff"></div>
<div class="a" style="left:70px;top:852px;width:987px;height:1px;background:#1c3038"></div>
<div class="a" style="left:79px;top:313px;width:15px;height:15px;border-radius:50%;background:radial-gradient(circle at 50% 35%,#ffffff,#e8eef8 60%,#a0b0c8);box-shadow:0 1px 2px #002040"></div>
<svg class="a" style="left:82px;top:318px;;shape-rendering:auto" width="9" height="5" viewBox="0 0 9 5" shape-rendering="crispEdges"><path d="M0.5 0 L8.5 0 L4.5 4.5Z" fill="#000"/></svg>
<div class="a" style="left:100px;top:307px;width:157px;height:27px;border-radius:13px;background:linear-gradient(#5a96be,#2e75a3 40%,#0f5d8e 80%,#0a5586);background-origin:border-box;border:2px solid #f4faff;border-top-color:transparent"></div>
<svg class="a" style="left:131px;top:310px;;shape-rendering:auto" width="16" height="16" viewBox="0 0 16 16" shape-rendering="crispEdges"><rect x="0" y="0" width="16" height="16" fill="#f4f8ff"/><rect x="0" y="4" width="16" height="4" fill="#b8dcf8"/><rect x="0" y="8" width="16" height="4" fill="#88c0ec"/><rect x="0" y="12" width="16" height="4" fill="#c8e4fa"/><path d="M1 15 Q4 14 6 11 Q8 7 10 5 Q12 3 15 2 Q12 5 10 8 Q8 12 5 14Z" fill="#101830"/><path d="M7 9 Q10 5 15 4" stroke="#101830" stroke-width="1" fill="none"/></svg>
<div class="t" style="left:153px;top:311.50px;font-size:13px;line-height:16px;font-weight:bold;color:#fff;text-shadow:1px 1px 1px #002040">Gallery</div>
<div class="a" style="left:1011px;top:313px;width:15px;height:14px;border-radius:1px;background:linear-gradient(#ffffff,#eef2f8);box-shadow:1px 1px 1px rgba(0,20,40,.6)"></div>
<svg class="a" style="left:1015px;top:316px;;shape-rendering:auto" width="8" height="9" viewBox="0 0 8 9" shape-rendering="crispEdges"><path d="M0 5 L8 5 L4 0.5Z" fill="#000"/><rect x="0" y="6.5" width="8" height="2" fill="#000"/></svg>
<div class="a" style="left:1032px;top:313px;width:15px;height:14px;border-radius:1px;background:linear-gradient(#ffffff,#eef2f8);box-shadow:1px 1px 1px rgba(0,20,40,.6)"></div>
<svg class="a" style="left:1036px;top:317px;;shape-rendering:auto" width="9" height="9" viewBox="0 0 9 9" shape-rendering="crispEdges"><path d="M1 1 L8 8 M8 1 L1 8" stroke="#000" stroke-width="2.2"/></svg>
<div class="t" style="left:90px;top:353.15px;font-size:14px;line-height:18px;font-weight:normal;color:#000;">/home/rolf/Bilder-und-Sounds/weltraum-bilder</div>
<div class="a" style="left:733px;top:351px;width:27px;height:26px;background:#dcdcdc;border-top:1px solid #fff;border-left:1px solid #fff;border-right:1px solid #000;border-bottom:1px solid #000;box-shadow:inset -1px -1px 0 #a8a8a8"></div>
<div class="a" style="left:767px;top:351px;width:27px;height:26px;background:#dcdcdc;border-top:1px solid #fff;border-left:1px solid #fff;border-right:1px solid #000;border-bottom:1px solid #000;box-shadow:inset -1px -1px 0 #a8a8a8"></div>
<div class="a" style="left:797px;top:351px;width:27px;height:26px;background:#dcdcdc;border-top:1px solid #fff;border-left:1px solid #fff;border-right:1px solid #000;border-bottom:1px solid #000;box-shadow:inset -1px -1px 0 #a8a8a8"></div>
<svg class="a" style="left:737px;top:355px;;shape-rendering:auto" width="20" height="18" viewBox="0 0 20 18" shape-rendering="crispEdges"><path d="M1.5 3.5 L6 3.5 L7 5 L14.5 5 L14.5 14.5 L1.5 14.5Z" fill="#f4f08c" stroke="#000"/><path d="M4.5 7 V11.5 H10" stroke="#000" fill="none"/><path d="M3 8.5 L4.5 6.5 L6 8.5" stroke="#000" fill="none"/><path d="M11 1 L18 1 L14.5 4.5Z" fill="#208040"/></svg>
<svg class="a" style="left:771px;top:355px;;shape-rendering:auto" width="20" height="18" viewBox="0 0 20 18" shape-rendering="crispEdges"><path d="M1.5 6.5 L6 6.5 L7 8 L12.5 8 L12.5 14.5 L1.5 14.5Z" fill="#f4f08c" stroke="#000"/><path d="M14 1 V8 M10.5 4.5 H17.5 M11.5 2 L16.5 7 M16.5 2 L11.5 7" stroke="#000" stroke-width="0.8" stroke-dasharray="1 1"/></svg>
<svg class="a" style="left:801px;top:355px;;shape-rendering:auto" width="20" height="18" viewBox="0 0 20 18" shape-rendering="crispEdges"><path d="M1.5 3.5 L6 3.5 L7 5 L14.5 5 L14.5 14.5 L1.5 14.5Z" fill="#f4f08c" stroke="#000"/><path d="M8 7 L17 15" stroke="#102090" stroke-width="2.5"/><path d="M5 10 L9 5" stroke="#60a8c8" stroke-width="2"/></svg>
<div class="a" style="left:91px;top:395px;width:732px;height:232px;background:#fff;border-top:1px solid #000;border-left:1px solid #000;box-shadow:inset 1px 1px 0 #8c8c8c;border-bottom:1px solid #f4f4f4;border-right:1px solid #f4f4f4"></div>
<div class="a" style="left:93px;top:397px;width:729px;height:25px;background:#dcdcdc"></div>
<div class="a" style="left:93px;top:422px;width:729px;height:1px;background:#000"></div>
<div class="a" style="left:271px;top:397px;width:1px;height:25px;background:#000"></div>
<div class="a" style="left:272px;top:397px;width:1px;height:25px;background:#fff"></div>
<div class="a" style="left:411px;top:397px;width:1px;height:25px;background:#000"></div>
<div class="a" style="left:412px;top:397px;width:1px;height:25px;background:#fff"></div>
<div class="a" style="left:491px;top:397px;width:1px;height:25px;background:#000"></div>
<div class="a" style="left:492px;top:397px;width:1px;height:25px;background:#fff"></div>
<div class="a" style="left:93px;top:397px;width:729px;height:1px;background:#fff"></div>
<div class="a" style="left:93px;top:397px;width:1px;height:25px;background:#fff"></div>
<div class="t" style="left:96px;top:401.15px;font-size:14px;line-height:18px;font-weight:normal;color:#000;">Titel</div>
<svg class="a" style="left:127px;top:404px;;shape-rendering:auto" width="9" height="9" viewBox="0 0 9 9" shape-rendering="crispEdges"><path d="M0.5 8.5 L8.5 8.5 L4.5 0.5Z" fill="none" stroke="#b0b0b0"/></svg>
<div class="t" style="left:275px;top:401.15px;font-size:14px;line-height:18px;font-weight:normal;color:#000;">Typ</div>
<div class="t" style="left:415px;top:401.15px;font-size:14px;line-height:18px;font-weight:normal;color:#000;">Größe</div>
<div class="t" style="left:495px;top:401.15px;font-size:14px;line-height:18px;font-weight:normal;color:#000;">Änderungsdatum</div>
<div class="a" style="left:93px;top:424px;width:172px;height:22px;overflow:hidden">
<div class="t" style="left:22px;top:2.15px;font-size:14px;line-height:18px;font-weight:normal;color:#000;letter-spacing:0.15px">desktop_01_1600x1200.jpg</div>
</div>
<svg class="a" style="left:94px;top:427px;;shape-rendering:auto" width="18" height="16" viewBox="0 0 18 16" shape-rendering="crispEdges"><path d="M0.5 0.5 H8.5 L11.5 3.5 V14.5 H0.5Z" fill="#fff" stroke="#808080"/><path d="M0.5 14.5 H11.5 V6" stroke="#000" fill="none"/><rect x="2" y="4" width="8" height="8" fill="#f4f0c0"/><rect x="3" y="5" width="5" height="5" fill="#e03020"/><path d="M7 6 Q9 8 8 11 L4 11Z" fill="#202020" opacity=".8"/><path d="M4 11 L6 8 L8 11Z" fill="#e8e070"/><path d="M9.5 6.5 L16 1.5" stroke="#101870" stroke-width="2.2"/></svg>
<div class="t" style="left:272px;top:426.15px;font-size:14px;line-height:18px;font-weight:normal;color:#000;">Grafik (jpg)</div>
<div class="t" style="left:482px;top:426.15px;font-size:14px;line-height:18px;font-weight:normal;color:#000;transform:translateX(-100%);">144,8 KB</div>
<div class="t" style="left:492px;top:426.15px;font-size:14px;line-height:18px;font-weight:normal;color:#000;">14.06.2002, 10:41:30</div>
<div class="a" style="left:93px;top:446px;width:172px;height:22px;overflow:hidden">
<div class="t" style="left:22px;top:2.15px;font-size:14px;line-height:18px;font-weight:normal;color:#000;letter-spacing:0.15px">desktop_02_1600x1200.jpg</div>
</div>
<svg class="a" style="left:94px;top:449px;;shape-rendering:auto" width="18" height="16" viewBox="0 0 18 16" shape-rendering="crispEdges"><path d="M0.5 0.5 H8.5 L11.5 3.5 V14.5 H0.5Z" fill="#fff" stroke="#808080"/><path d="M0.5 14.5 H11.5 V6" stroke="#000" fill="none"/><rect x="2" y="4" width="8" height="8" fill="#f4f0c0"/><rect x="3" y="5" width="5" height="5" fill="#e03020"/><path d="M7 6 Q9 8 8 11 L4 11Z" fill="#202020" opacity=".8"/><path d="M4 11 L6 8 L8 11Z" fill="#e8e070"/><path d="M9.5 6.5 L16 1.5" stroke="#101870" stroke-width="2.2"/></svg>
<div class="t" style="left:272px;top:448.15px;font-size:14px;line-height:18px;font-weight:normal;color:#000;">Grafik (jpg)</div>
<div class="t" style="left:482px;top:448.15px;font-size:14px;line-height:18px;font-weight:normal;color:#000;transform:translateX(-100%);">16,1 KB</div>
<div class="t" style="left:492px;top:448.15px;font-size:14px;line-height:18px;font-weight:normal;color:#000;">22.05.2002, 17:33:22</div>
<div class="a" style="left:93px;top:468px;width:172px;height:22px;overflow:hidden">
<div class="t" style="left:22px;top:2.15px;font-size:14px;line-height:18px;font-weight:normal;color:#000;letter-spacing:0.15px">desktop_03_1600x1200.jpg</div>
</div>
<svg class="a" style="left:94px;top:471px;;shape-rendering:auto" width="18" height="16" viewBox="0 0 18 16" shape-rendering="crispEdges"><path d="M0.5 0.5 H8.5 L11.5 3.5 V14.5 H0.5Z" fill="#fff" stroke="#808080"/><path d="M0.5 14.5 H11.5 V6" stroke="#000" fill="none"/><rect x="2" y="4" width="8" height="8" fill="#f4f0c0"/><rect x="3" y="5" width="5" height="5" fill="#e03020"/><path d="M7 6 Q9 8 8 11 L4 11Z" fill="#202020" opacity=".8"/><path d="M4 11 L6 8 L8 11Z" fill="#e8e070"/><path d="M9.5 6.5 L16 1.5" stroke="#101870" stroke-width="2.2"/></svg>
<div class="t" style="left:272px;top:470.15px;font-size:14px;line-height:18px;font-weight:normal;color:#000;">Grafik (jpg)</div>
<div class="t" style="left:482px;top:470.15px;font-size:14px;line-height:18px;font-weight:normal;color:#000;transform:translateX(-100%);">613,8 KB</div>
<div class="t" style="left:492px;top:470.15px;font-size:14px;line-height:18px;font-weight:normal;color:#000;">14.06.2002, 11:13:36</div>
<div class="a" style="left:93px;top:490px;width:172px;height:22px;overflow:hidden">
<div class="t" style="left:22px;top:2.15px;font-size:14px;line-height:18px;font-weight:normal;color:#000;letter-spacing:0.15px">galaxie1.png</div>
</div>
<svg class="a" style="left:94px;top:493px;;shape-rendering:auto" width="18" height="16" viewBox="0 0 18 16" shape-rendering="crispEdges"><path d="M0.5 0.5 H8.5 L11.5 3.5 V14.5 H0.5Z" fill="#fff" stroke="#808080"/><path d="M0.5 14.5 H11.5 V6" stroke="#000" fill="none"/><rect x="2" y="4" width="8" height="8" fill="#f4f0c0"/><rect x="3" y="5" width="5" height="5" fill="#30b030"/><path d="M7 6 Q9 8 8 11 L4 11Z" fill="#202020" opacity=".8"/><path d="M4 11 L6 8 L8 11Z" fill="#e8e070"/><path d="M9.5 6.5 L16 1.5" stroke="#101870" stroke-width="2.2"/></svg>
<div class="t" style="left:272px;top:492.15px;font-size:14px;line-height:18px;font-weight:normal;color:#000;">Grafik (png)</div>
<div class="t" style="left:482px;top:492.15px;font-size:14px;line-height:18px;font-weight:normal;color:#000;transform:translateX(-100%);">2,95 MB</div>
<div class="t" style="left:492px;top:492.15px;font-size:14px;line-height:18px;font-weight:normal;color:#000;">01.03.2002, 19:32:58</div>
<div class="a" style="left:93px;top:512px;width:172px;height:22px;overflow:hidden">
<div class="t" style="left:22px;top:2.15px;font-size:14px;line-height:18px;font-weight:normal;color:#000;letter-spacing:0.15px">mond1.gif</div>
</div>
<svg class="a" style="left:94px;top:515px;;shape-rendering:auto" width="18" height="16" viewBox="0 0 18 16" shape-rendering="crispEdges"><path d="M0.5 0.5 H8.5 L11.5 3.5 V14.5 H0.5Z" fill="#fff" stroke="#808080"/><path d="M0.5 14.5 H11.5 V6" stroke="#000" fill="none"/><rect x="2" y="4" width="8" height="8" fill="#f4f0c0"/><rect x="3" y="5" width="5" height="5" fill="#30b030"/><path d="M7 6 Q9 8 8 11 L4 11Z" fill="#202020" opacity=".8"/><path d="M4 11 L6 8 L8 11Z" fill="#e8e070"/><path d="M9.5 6.5 L16 1.5" stroke="#101870" stroke-width="2.2"/></svg>
<div class="t" style="left:272px;top:514.15px;font-size:14px;line-height:18px;font-weight:normal;color:#000;">Grafik (gif)</div>
<div class="t" style="left:482px;top:514.15px;font-size:14px;line-height:18px;font-weight:normal;color:#000;transform:translateX(-100%);">4,12 MB</div>
<div class="t" style="left:492px;top:514.15px;font-size:14px;line-height:18px;font-weight:normal;color:#000;">02.03.2002, 17:37:14</div>
<div class="a" style="left:93px;top:534px;width:172px;height:22px;overflow:hidden">
<div class="t" style="left:22px;top:2.15px;font-size:14px;line-height:18px;font-weight:normal;color:#000;letter-spacing:0.15px">nebel1.png</div>
</div>
<svg class="a" style="left:94px;top:537px;;shape-rendering:auto" width="18" height="16" viewBox="0 0 18 16" shape-rendering="crispEdges"><path d="M0.5 0.5 H8.5 L11.5 3.5 V14.5 H0.5Z" fill="#fff" stroke="#808080"/><path d="M0.5 14.5 H11.5 V6" stroke="#000" fill="none"/><rect x="2" y="4" width="8" height="8" fill="#f4f0c0"/><rect x="3" y="5" width="5" height="5" fill="#30b030"/><path d="M7 6 Q9 8 8 11 L4 11Z" fill="#202020" opacity=".8"/><path d="M4 11 L6 8 L8 11Z" fill="#e8e070"/><path d="M9.5 6.5 L16 1.5" stroke="#101870" stroke-width="2.2"/></svg>
<div class="t" style="left:272px;top:536.15px;font-size:14px;line-height:18px;font-weight:normal;color:#000;">Grafik (png)</div>
<div class="t" style="left:482px;top:536.15px;font-size:14px;line-height:18px;font-weight:normal;color:#000;transform:translateX(-100%);">6,05 MB</div>
<div class="t" style="left:492px;top:536.15px;font-size:14px;line-height:18px;font-weight:normal;color:#000;">01.03.2002, 19:49:06</div>
<div class="a" style="left:93px;top:556px;width:172px;height:22px;overflow:hidden">
<div class="t" style="left:22px;top:2.15px;font-size:14px;line-height:18px;font-weight:normal;color:#000;letter-spacing:0.15px">nebel2.jpg</div>
</div>
<svg class="a" style="left:94px;top:559px;;shape-rendering:auto" width="18" height="16" viewBox="0 0 18 16" shape-rendering="crispEdges"><path d="M0.5 0.5 H8.5 L11.5 3.5 V14.5 H0.5Z" fill="#fff" stroke="#808080"/><path d="M0.5 14.5 H11.5 V6" stroke="#000" fill="none"/><rect x="2" y="4" width="8" height="8" fill="#f4f0c0"/><rect x="3" y="5" width="5" height="5" fill="#e03020"/><path d="M7 6 Q9 8 8 11 L4 11Z" fill="#202020" opacity=".8"/><path d="M4 11 L6 8 L8 11Z" fill="#e8e070"/><path d="M9.5 6.5 L16 1.5" stroke="#101870" stroke-width="2.2"/></svg>
<div class="t" style="left:272px;top:558.15px;font-size:14px;line-height:18px;font-weight:normal;color:#000;">Grafik (jpg)</div>
<div class="t" style="left:482px;top:558.15px;font-size:14px;line-height:18px;font-weight:normal;color:#000;transform:translateX(-100%);">3,01 MB</div>
<div class="t" style="left:492px;top:558.15px;font-size:14px;line-height:18px;font-weight:normal;color:#000;">12.10.2002, 02:15:46</div>
<div class="a" style="left:93px;top:578px;width:172px;height:22px;overflow:hidden">
<div class="t" style="left:22px;top:2.15px;font-size:14px;line-height:18px;font-weight:normal;color:#000;letter-spacing:0.15px">phot-46b-98-hires.jpg</div>
</div>
<svg class="a" style="left:94px;top:581px;;shape-rendering:auto" width="18" height="16" viewBox="0 0 18 16" shape-rendering="crispEdges"><path d="M0.5 0.5 H8.5 L11.5 3.5 V14.5 H0.5Z" fill="#fff" stroke="#808080"/><path d="M0.5 14.5 H11.5 V6" stroke="#000" fill="none"/><rect x="2" y="4" width="8" height="8" fill="#f4f0c0"/><rect x="3" y="5" width="5" height="5" fill="#e03020"/><path d="M7 6 Q9 8 8 11 L4 11Z" fill="#202020" opacity=".8"/><path d="M4 11 L6 8 L8 11Z" fill="#e8e070"/><path d="M9.5 6.5 L16 1.5" stroke="#101870" stroke-width="2.2"/></svg>
<div class="t" style="left:272px;top:580.15px;font-size:14px;line-height:18px;font-weight:normal;color:#000;">Grafik (jpg)</div>
<div class="t" style="left:482px;top:580.15px;font-size:14px;line-height:18px;font-weight:normal;color:#000;transform:translateX(-100%);">3,55 MB</div>
<div class="t" style="left:492px;top:580.15px;font-size:14px;line-height:18px;font-weight:normal;color:#000;">12.10.2002, 02:10:59</div>
<div class="a" style="left:93px;top:600px;width:172px;height:22px;overflow:hidden">
<div class="t" style="left:22px;top:2.15px;font-size:14px;line-height:18px;font-weight:normal;color:#000;letter-spacing:0.15px">sofi1000r.jpg</div>
</div>
<svg class="a" style="left:94px;top:603px;;shape-rendering:auto" width="18" height="16" viewBox="0 0 18 16" shape-rendering="crispEdges"><path d="M0.5 0.5 H8.5 L11.5 3.5 V14.5 H0.5Z" fill="#fff" stroke="#808080"/><path d="M0.5 14.5 H11.5 V6" stroke="#000" fill="none"/><rect x="2" y="4" width="8" height="8" fill="#f4f0c0"/><rect x="3" y="5" width="5" height="5" fill="#e03020"/><path d="M7 6 Q9 8 8 11 L4 11Z" fill="#202020" opacity=".8"/><path d="M4 11 L6 8 L8 11Z" fill="#e8e070"/><path d="M9.5 6.5 L16 1.5" stroke="#101870" stroke-width="2.2"/></svg>
<div class="t" style="left:272px;top:602.15px;font-size:14px;line-height:18px;font-weight:normal;color:#000;">Grafik (jpg)</div>
<div class="t" style="left:482px;top:602.15px;font-size:14px;line-height:18px;font-weight:normal;color:#000;transform:translateX(-100%);">33,3 KB</div>
<div class="t" style="left:492px;top:602.15px;font-size:14px;line-height:18px;font-weight:normal;color:#000;">02.07.2002, 21:40:36</div>
<svg class="a" style="left:94px;top:623px;" width="17" height="4" viewBox="0 0 17 4" shape-rendering="crispEdges"><rect x="0.5" y="2.5" width="11" height="2" fill="#fff" stroke="#aaa"/></svg>
<div class="a" style="left:806px;top:423px;width:16px;height:203px;background:#e8e8e8;border-left:1px solid #fff"></div>
<div class="a" style="left:806px;top:423px;width:16px;height:16px;background:#dcdcdc;border-top:1px solid #fff;border-left:1px solid #fff;border-bottom:2px solid #000;border-right:1px solid #f0f0f0"></div>
<svg class="a" style="left:809px;top:428px;;shape-rendering:auto" width="9" height="5" viewBox="0 0 9 5" shape-rendering="crispEdges"><path d="M0 4.5 L9 4.5 L4.5 0Z" fill="#a0a0a0"/></svg>
<div class="a" style="left:806px;top:439px;width:16px;height:62px;background:#dcdcdc;border-left:1px solid #fff;border-bottom:2px solid #000;border-right:2px solid #000"></div>
<div class="a" style="left:821px;top:397px;width:1px;height:229px;background:#000"></div>
<div class="a" style="left:806px;top:609px;width:16px;height:17px;background:#dcdcdc;border-top:1px solid #fff;border-left:1px solid #fff;border-bottom:2px solid #000;border-right:2px solid #000"></div>
<svg class="a" style="left:810px;top:614px;;shape-rendering:auto" width="9" height="5" viewBox="0 0 9 5" shape-rendering="crispEdges"><path d="M0 0 L9 0 L4.5 4.5Z" fill="#000"/></svg>
<div class="t" style="left:90px;top:650.15px;font-size:14px;line-height:18px;font-weight:normal;color:#000;">Datei<span style="text-decoration:underline;text-underline-offset:2px">n</span>ame:</div>
<div class="t" style="left:90px;top:691.15px;font-size:14px;line-height:18px;font-weight:normal;color:#000;">Datei<span style="text-decoration:underline;text-underline-offset:2px">t</span>yp:</div>
<div class="a" style="left:235px;top:645px;width:432px;height:28px;background:#fff;border-top:1px solid #000;border-left:1px solid #000;box-shadow:inset 1px 1px 0 #8c8c8c;border-bottom:1px solid #f4f4f4;border-right:1px solid #f4f4f4"></div>
<div class="t" style="left:239px;top:651.15px;font-size:14px;line-height:18px;font-weight:normal;color:#000;">sonne-öl.jpg</div>
<div class="a" style="left:651px;top:647px;width:16px;height:25px;background:#dcdcdc;border-top:1px solid #fff;border-left:1px solid #fff;border-right:1px solid #000;border-bottom:1px solid #000;box-shadow:inset -1px -1px 0 #a8a8a8"></div>
<svg class="a" style="left:655px;top:656px;;shape-rendering:auto" width="8" height="5" viewBox="0 0 8 5" shape-rendering="crispEdges"><path d="M0 0 L8 0 L4 4.5Z" fill="#000"/></svg>
<div class="a" style="left:235px;top:686px;width:432px;height:28px;background:#fff;border-top:1px solid #000;border-left:1px solid #000;box-shadow:inset 1px 1px 0 #8c8c8c;border-bottom:1px solid #f4f4f4;border-right:1px solid #f4f4f4"></div>
<div class="a" style="left:237px;top:688px;width:414px;height:24px;overflow:hidden">
<div class="t" style="left:1px;top:3.15px;font-size:14px;line-height:18px;font-weight:normal;color:#000;">&lt;Alle Formate&gt; (*.bmp;*.dxf;*.emf;*.eps;*.gif;*.jpg;*.jpeg;*.jfif;*.jif;*.pbm</div>
</div>
<div class="a" style="left:651px;top:688px;width:16px;height:25px;background:#dcdcdc;border-top:1px solid #fff;border-left:1px solid #fff;border-right:1px solid #000;border-bottom:1px solid #000;box-shadow:inset -1px -1px 0 #a8a8a8"></div>
<svg class="a" style="left:655px;top:697px;;shape-rendering:auto" width="8" height="5" viewBox="0 0 8 5" shape-rendering="crispEdges"><path d="M0 0 L8 0 L4 4.5Z" fill="#000"/></svg>
<div class="a" style="left:686px;top:644px;width:138px;height:39px;background:#dcdcdc;border:1px solid #000;box-shadow:inset 1px 1px 0 #fff,inset -1px -1px 0 #000"></div>
<div class="t" style="left:754px;top:655.15px;font-size:14px;line-height:18px;font-weight:normal;color:#000;transform:translateX(-50%);">Ö<span style="text-decoration:underline;text-underline-offset:2px">f</span>fnen</div>
<div class="a" style="left:686px;top:691px;width:138px;height:39px;background:#dcdcdc;border-top:1px solid #fff;border-left:1px solid #fff;border-right:1px solid #000;border-bottom:1px solid #000;box-shadow:inset -1px -1px 0 #a8a8a8;"></div>
<div class="t" style="left:754px;top:702.15px;font-size:14px;line-height:18px;font-weight:normal;color:#000;transform:translateX(-50%);">Abbrechen</div>
<div class="a" style="left:686px;top:740px;width:138px;height:39px;background:#dcdcdc;border-top:1px solid #fff;border-left:1px solid #fff;border-right:1px solid #000;border-bottom:1px solid #000;box-shadow:inset -1px -1px 0 #a8a8a8;"></div>
<div class="t" style="left:754px;top:751.15px;font-size:14px;line-height:18px;font-weight:normal;color:#000;transform:translateX(-50%);"><span style="text-decoration:underline;text-underline-offset:2px">H</span>ilfe</div>
<div class="a" style="left:91px;top:798px;width:13px;height:13px;background:#dcdcdc;border-top:1px solid #000;border-left:1px solid #000;box-shadow:inset 1px 1px 0 #8c8c8c;border-bottom:1px solid #fff;border-right:1px solid #fff"></div>
<div class="t" style="left:109px;top:796.15px;font-size:14px;line-height:18px;font-weight:normal;color:#a0a0a0;text-shadow:1px 1px 0 #fff"><span style="text-decoration:underline;text-underline-offset:2px">V</span>erknüpfen</div>
<div class="a" style="left:211px;top:798px;width:13px;height:13px;background:#fff;border-top:1px solid #000;border-left:1px solid #000;box-shadow:inset 1px 1px 0 #8c8c8c;border-bottom:1px solid #fff;border-right:1px solid #fff"></div>
<svg class="a" style="left:213px;top:800px;;shape-rendering:auto" width="10" height="10" viewBox="0 0 10 10" shape-rendering="crispEdges"><path d="M1.5 4.5 L4 7.5 L8.5 1.5" stroke="#000" stroke-width="2" fill="none"/></svg>
<div class="t" style="left:229px;top:796.15px;font-size:14px;line-height:18px;font-weight:normal;color:#000;">V<span style="text-decoration:underline;text-underline-offset:2px">o</span>rschau</div>
<div class="a" style="left:841px;top:343px;width:198px;height:481px;background:#fff;border-top:1px solid #000;border-left:1px solid #000;box-shadow:inset 1px 1px 0 #8c8c8c;border-bottom:2px solid #fff;border-right:2px solid #fff"></div>
<svg class="a" style="left:11px;top:735px;" width="15" height="15" viewBox="0 0 15 15" shape-rendering="crispEdges"><rect x="0.5" y="0.5" width="14" height="14" fill="#000"/><g fill="#fff"><rect x="2" y="2" width="2" height="2"/><rect x="2" y="5" width="2" height="2"/><rect x="2" y="8" width="2" height="2"/><rect x="2" y="11" width="2" height="2"/><rect x="5" y="2" width="8" height="2"/><rect x="5" y="5" width="3" height="2"/><rect x="9" y="5" width="4" height="2"/><rect x="5" y="8" width="3" height="2"/><rect x="9" y="8" width="4" height="2"/><rect x="5" y="11" width="3" height="2"/><rect x="9" y="11" width="4" height="2"/></g></svg>
<svg class="a" style="left:22px;top:734px;;shape-rendering:auto" width="5" height="8" viewBox="0 0 5 8" shape-rendering="crispEdges"><path d="M0 0 L0 7 L4 3.5Z" fill="#30b040" stroke="#000" stroke-width="0.6"/></svg>
<svg class="a" style="left:10px;top:767px;;shape-rendering:auto" width="16" height="13" viewBox="0 0 16 13" shape-rendering="crispEdges"><path d="M3 1.5h9M3 3.5h9M3 6.5h12M3 9.5h12M3 12h12" stroke="#000" stroke-width="1.2"/><rect x="5" y="5" width="6" height="3" fill="#f0f0a0"/><path d="M0 4 L0 10 L3 7Z" fill="#1020a0"/></svg>
<svg class="a" style="left:22px;top:765px;;shape-rendering:auto" width="5" height="8" viewBox="0 0 5 8" shape-rendering="crispEdges"><path d="M0 0 L0 7 L4 3.5Z" fill="#30b040" stroke="#000" stroke-width="0.6"/></svg>
<svg class="a" style="left:10px;top:791px;;shape-rendering:auto" width="13" height="13" viewBox="0 0 13 13" shape-rendering="crispEdges"><circle cx="6.5" cy="6.5" r="5.8" fill="#a04080" stroke="#000" stroke-width="1.2"/><path d="M6.5 6.5 L6.5 0.7 A5.8 5.8 0 0 0 1 8.5Z" fill="#f0f060"/><path d="M6.5 6.5 L6.5 0.7 A5.8 5.8 0 0 1 12.3 6.5Z" fill="#40b0c0"/></svg>
<svg class="a" style="left:22px;top:788px;;shape-rendering:auto" width="5" height="8" viewBox="0 0 5 8" shape-rendering="crispEdges"><path d="M0 0 L0 7 L4 3.5Z" fill="#30b040" stroke="#000" stroke-width="0.6"/></svg>
<svg class="a" style="left:10px;top:812px;;shape-rendering:auto" width="14" height="15" viewBox="0 0 14 15" shape-rendering="crispEdges"><path d="M1 5 H8 M1 5 V14 H4" stroke="#000" stroke-width="1.5" fill="none"/><rect x="1.5" y="5.5" width="6" height="8" fill="#fff"/><path d="M4 13 L12 5" stroke="#1020a0" stroke-width="2.5"/></svg>
<svg class="a" style="left:22px;top:811px;;shape-rendering:auto" width="5" height="8" viewBox="0 0 5 8" shape-rendering="crispEdges"><path d="M0 0 L0 7 L4 3.5Z" fill="#30b040" stroke="#000" stroke-width="0.6"/></svg>
<svg class="a" style="left:11px;top:836px;;shape-rendering:auto" width="13" height="14" viewBox="0 0 13 14" shape-rendering="crispEdges"><rect x="0.5" y="0.5" width="12" height="13" fill="#fff" stroke="#000" stroke-width="1.3"/><rect x="0.5" y="0.5" width="12" height="2" fill="#000"/><path d="M2 5h3M6 5h4M2 8h8M2 11h8" stroke="#000" stroke-width="1.3"/></svg>
<svg class="a" style="left:22px;top:835px;;shape-rendering:auto" width="5" height="8" viewBox="0 0 5 8" shape-rendering="crispEdges"><path d="M0 0 L0 7 L4 3.5Z" fill="#30b040" stroke="#000" stroke-width="0.6"/></svg>
<svg class="a" style="left:11px;top:865px;;shape-rendering:auto" width="14" height="18" viewBox="0 0 14 18" shape-rendering="crispEdges"><text x="4" y="7" font-family="Liberation Sans" font-size="7" font-weight="bold" fill="#000">A</text><path d="M5 8 L2 11 M7 8 L10 11" stroke="#1020a0" stroke-width="0.8"/><text x="1" y="17" font-family="Liberation Sans" font-size="7" font-weight="bold" fill="#1020a0">ABC</text></svg>
<svg class="a" style="left:22px;top:865px;;shape-rendering:auto" width="5" height="8" viewBox="0 0 5 8" shape-rendering="crispEdges"><path d="M0 0 L0 7 L4 3.5Z" fill="#30b040" stroke="#000" stroke-width="0.6"/></svg>
<svg class="a" style="left:14px;top:889px;;shape-rendering:auto" width="9" height="15" viewBox="0 0 9 15" shape-rendering="crispEdges"><path d="M1 1 H7 M4 1 V13 M1 13 H7" stroke="#202060" stroke-width="1.6" fill="none"/><path d="M5 2 V12" stroke="#a0a0c0" stroke-width="1"/></svg>
<svg class="a" style="left:9px;top:918px;;shape-rendering:auto" width="17" height="16" viewBox="0 0 17 16" shape-rendering="crispEdges"><text x="0" y="8" font-family="Liberation Sans" font-size="8" font-weight="bold" fill="#000">ABC</text><path d="M1 10 L5 14 L16 8" stroke="#102070" stroke-width="2" fill="none"/></svg>
<svg class="a" style="left:9px;top:945px;;shape-rendering:auto" width="17" height="13" viewBox="0 0 17 13" shape-rendering="crispEdges"><text x="1" y="7" font-family="Liberation Sans" font-size="7.5" font-weight="bold" fill="#000">ABC</text><path d="M0 11 Q3 8 6 11 Q9 13 12 10 Q14 9 17 11" stroke="#d02020" stroke-width="1.2" fill="none"/></svg>
<div class="a" style="left:297px;top:142px;width:80px;height:60px;overflow:hidden;background:linear-gradient(#3a3e46 0%,#50565e 25%,#7a8288 45%,#a8b0b8 55%,#c8ccd0 60%,#4a6250 63%,#2e4a34 75%,#264830 100%)">
<div class="a" style="left:-6px;top:4px;width:32px;height:38px;border-radius:50% 50% 20% 20%;background:radial-gradient(ellipse closest-side,#283430 55%,rgba(40,52,48,.6) 85%,transparent)"></div>
<div class="a" style="left:28px;top:-2px;width:54px;height:34px;border-radius:45%;background:radial-gradient(ellipse closest-side,#34463a 45%,rgba(52,70,58,.7) 80%,transparent 100%)"></div>
<div class="a" style="left:0px;top:30px;width:80px;height:8px;background:linear-gradient(rgba(210,215,220,0),rgba(210,215,220,.8),rgba(210,215,220,0))"></div>
<svg class="a" style="left:0px;top:0px;;shape-rendering:auto" width="80" height="60" viewBox="0 0 80 60" shape-rendering="crispEdges"><g stroke="#1a2420" stroke-width="1.5"><path d="M6 20 V40 M14 22 V40 M52 18 V40 M66 20 V40 M74 22 V38"/></g><g fill="#141414"><path d="M-2 0 L0 0 Z"/><path d="M34 24 L35 19 L38 18 L40 23 L48 24 L49 30 L47 31 L47 40 L45 40 L45 32 L39 32 L38 40 L36 40 L37 31 Z"/><path d="M50 26 L53 22 L57 24 L64 25 L65 31 L64 39 L62 39 L62 33 L56 33 L55 39 L53 39 L53 31 Z"/></g><g fill="#e8e8f0"><rect x="40" y="25" width="6" height="4"/><rect x="56" y="26" width="6" height="4"/></g></svg>
</div>
<div class="a" style="left:385px;top:144px;width:80px;height:55px;overflow:hidden;background:#0a0812">
<svg class="a" style="left:0px;top:0px;;shape-rendering:auto" width="80" height="55" viewBox="0 0 80 55" shape-rendering="crispEdges"><defs><radialGradient id="nb1" cx="50%" cy="50%" r="50%"><stop offset="0" stop-color="#fff0b0"/><stop offset=".3" stop-color="#e8c060"/><stop offset=".65" stop-color="#a06828" stop-opacity=".85"/><stop offset="1" stop-color="#401808" stop-opacity="0"/></radialGradient><radialGradient id="nb2" cx="50%" cy="50%" r="50%"><stop offset="0" stop-color="#8880d8" stop-opacity=".9"/><stop offset=".6" stop-color="#5048a0" stop-opacity=".6"/><stop offset="1" stop-color="#201840" stop-opacity="0"/></radialGradient><radialGradient id="nb3" cx="50%" cy="50%" r="50%"><stop offset="0" stop-color="#c0e880" stop-opacity=".9"/><stop offset="1" stop-color="#80a040" stop-opacity="0"/></radialGradient><radialGradient id="nb4" cx="50%" cy="50%" r="50%"><stop offset="0" stop-color="#f0e8d8" stop-opacity=".5"/><stop offset="1" stop-color="#f0e8d8" stop-opacity="0"/></radialGradient></defs><ellipse cx="62" cy="30" rx="22" ry="26" fill="url(#nb2)"/><ellipse cx="38" cy="30" rx="24" ry="34" fill="url(#nb1)" transform="rotate(35 38 30)"/><ellipse cx="46" cy="14" rx="12" ry="8" fill="url(#nb4)"/><ellipse cx="30" cy="38" rx="8" ry="7" fill="url(#nb3)"/><g fill="#fff"><circle cx="70" cy="22" r=".7"/><circle cx="58" cy="46" r=".6"/><circle cx="12" cy="10" r=".5"/><circle cx="75" cy="50" r=".6"/><circle cx="20" cy="48" r=".5"/><circle cx="52" cy="8" r=".5"/></g></svg>
</div>
<div class="a" style="left:842px;top:499px;width:195px;height:168px;overflow:hidden;background:radial-gradient(circle at 47% 52%,#ff2000 0%,#f01800 42%,#e00c00 52%,#b80400 70%,#700000 92%,#500000 100%)">
<svg class="a" style="left:0px;top:0px;;shape-rendering:auto" width="195" height="168" viewBox="0 0 195 168" shape-rendering="crispEdges"><defs><radialGradient id="sg" cx="50%" cy="48%" r="50%"><stop offset="0" stop-color="#ffff70"/><stop offset=".3" stop-color="#ffff18"/><stop offset=".7" stop-color="#fff000"/><stop offset=".9" stop-color="#f8d000"/><stop offset="1" stop-color="#f0b000"/></radialGradient></defs><polygon points="167.1,87.0 166.0,93.5 167.6,100.3 163.3,106.1 163.6,113.1 160.3,118.8 155.9,123.9 154.3,130.6 148.4,134.4 145.5,140.5 139.5,143.6 134.4,147.6 129.8,152.5 124.8,157.4 117.3,156.6 111.3,159.1 105.3,162.5 98.8,164.9 92.0,163.4 85.4,162.2 78.4,164.2 72.9,158.2 65.4,160.1 60.3,154.9 54.9,151.3 49.5,147.7 43.8,144.5 37.1,141.9 35.0,134.8 29.4,130.8 25.6,125.3 23.7,118.8 20.4,113.1 20.7,106.1 19.3,99.8 17.8,93.5 15.1,87.0 16.6,80.4 18.1,74.0 18.2,67.2 20.8,61.1 24.0,55.3 24.9,48.3 28.9,42.8 34.8,39.0 38.0,33.0 43.1,28.7 47.3,23.2 53.4,20.2 60.3,19.1 65.2,13.3 72.8,15.4 78.9,12.6 85.3,10.0 92.0,12.7 98.6,11.3 104.8,14.4 111.9,12.8 118.4,14.3 124.3,17.8 130.9,19.6 135.1,25.5 141.5,28.0 146.1,32.9 150.5,37.9 154.1,43.5 159.3,48.2 162.9,53.9 163.3,61.1 166.2,67.1 164.7,74.2 168.7,80.3" fill="url(#sg)"/><rect x="48.7" y="29.6" width="6.9" height="3.1" fill="#e8a000" opacity="0.70"/><rect x="51.9" y="144.4" width="4.1" height="4.4" fill="#fff000" opacity="0.37"/><rect x="95.0" y="61.2" width="3.5" height="3.6" fill="#fff000" opacity="0.38"/><rect x="41.2" y="103.8" width="7.3" height="5.3" fill="#ffff30" opacity="0.63"/><rect x="151.4" y="81.9" width="4.3" height="2.9" fill="#f0a000" opacity="0.42"/><rect x="95.9" y="121.7" width="4.9" height="4.4" fill="#ffff30" opacity="0.46"/><rect x="124.2" y="128.8" width="5.7" height="3.3" fill="#e89800" opacity="0.63"/><rect x="35.5" y="81.5" width="6.1" height="2.2" fill="#e8a000" opacity="0.51"/><rect x="52.6" y="117.9" width="4.4" height="2.8" fill="#f8c000" opacity="0.53"/><rect x="135.1" y="122.7" width="2.6" height="4.3" fill="#f0a000" opacity="0.73"/><rect x="77.5" y="74.5" width="3.2" height="3.5" fill="#ffff30" opacity="0.73"/><rect x="52.2" y="57.2" width="2.7" height="4.0" fill="#fff000" opacity="0.54"/><rect x="81.6" y="112.4" width="6.5" height="5.0" fill="#fff000" opacity="0.68"/><rect x="97.8" y="96.3" width="7.7" height="4.1" fill="#e89800" opacity="0.63"/><rect x="145.9" y="54.7" width="3.8" height="4.6" fill="#f0a000" opacity="0.63"/><rect x="88.9" y="130.6" width="3.0" height="5.1" fill="#d87800" opacity="0.60"/><rect x="43.4" y="45.1" width="6.5" height="2.8" fill="#f8c000" opacity="0.68"/><rect x="89.8" y="52.7" width="5.1" height="3.4" fill="#e08800" opacity="0.75"/><rect x="104.4" y="39.0" width="3.2" height="4.4" fill="#d87800" opacity="0.53"/><rect x="158.2" y="59.3" width="7.7" height="3.5" fill="#f8c000" opacity="0.39"/><rect x="50.8" y="94.8" width="4.9" height="5.9" fill="#e08800" opacity="0.54"/><rect x="55.0" y="34.1" width="2.5" height="4.6" fill="#e8a000" opacity="0.66"/><rect x="92.0" y="37.1" width="3.1" height="5.2" fill="#d87800" opacity="0.38"/><rect x="149.9" y="66.6" width="4.8" height="5.0" fill="#f0a000" opacity="0.64"/><rect x="104.4" y="109.6" width="2.9" height="5.6" fill="#e89800" opacity="0.59"/><rect x="51.0" y="58.8" width="7.6" height="2.6" fill="#e89800" opacity="0.36"/><rect x="110.8" y="28.4" width="2.6" height="5.0" fill="#e89800" opacity="0.52"/><rect x="137.4" y="39.7" width="3.3" height="3.0" fill="#ffff30" opacity="0.55"/><rect x="95.5" y="45.9" width="5.3" height="5.3" fill="#e08800" opacity="0.71"/><rect x="62.3" y="125.8" width="5.5" height="5.6" fill="#e8a000" opacity="0.68"/><rect x="110.8" y="68.9" width="2.9" height="4.0" fill="#fff000" opacity="0.66"/><rect x="42.6" y="46.9" width="2.9" height="2.6" fill="#f0a000" opacity="0.57"/><rect x="68.1" y="133.2" width="5.3" height="5.1" fill="#f0a000" opacity="0.70"/><rect x="121.6" y="98.0" width="2.3" height="2.4" fill="#fff000" opacity="0.57"/><rect x="96.3" y="18.2" width="4.7" height="4.5" fill="#f8c000" opacity="0.63"/><rect x="41.6" y="102.6" width="4.9" height="5.8" fill="#ffff30" opacity="0.72"/><rect x="117.4" y="66.7" width="4.7" height="3.7" fill="#e8a000" opacity="0.53"/><rect x="123.8" y="102.6" width="2.4" height="4.7" fill="#f0a000" opacity="0.71"/><rect x="126.5" y="137.4" width="6.0" height="2.6" fill="#e89800" opacity="0.74"/><rect x="105.4" y="156.2" width="4.4" height="3.9" fill="#f8c000" opacity="0.41"/><rect x="44.9" y="108.6" width="4.0" height="2.8" fill="#d87800" opacity="0.39"/><rect x="64.1" y="118.3" width="4.8" height="4.8" fill="#e8a000" opacity="0.48"/><rect x="55.2" y="50.7" width="2.4" height="5.9" fill="#f8c000" opacity="0.74"/><rect x="121.4" y="109.8" width="2.2" height="5.1" fill="#ffff30" opacity="0.65"/><rect x="120.3" y="26.7" width="6.1" height="5.8" fill="#e8a000" opacity="0.41"/><rect x="139.7" y="60.5" width="6.2" height="2.4" fill="#e08800" opacity="0.67"/><rect x="119.8" y="149.4" width="3.6" height="2.1" fill="#f0a000" opacity="0.67"/><rect x="149.8" y="120.6" width="2.4" height="5.5" fill="#fff000" opacity="0.35"/><rect x="138.6" y="85.3" width="7.5" height="4.5" fill="#e08800" opacity="0.56"/><rect x="93.7" y="110.8" width="3.0" height="2.2" fill="#f8c000" opacity="0.72"/><rect x="55.7" y="48.9" width="3.2" height="3.8" fill="#e89800" opacity="0.46"/><rect x="115.8" y="19.1" width="2.2" height="2.1" fill="#f8c000" opacity="0.56"/><rect x="93.3" y="135.3" width="5.9" height="4.6" fill="#fff000" opacity="0.57"/><rect x="146.4" y="41.2" width="3.8" height="2.9" fill="#f8c000" opacity="0.49"/><rect x="122.0" y="34.2" width="5.8" height="3.6" fill="#d87800" opacity="0.74"/><rect x="96.5" y="79.6" width="5.8" height="5.5" fill="#e8a000" opacity="0.42"/><rect x="149.1" y="120.5" width="7.2" height="4.7" fill="#ffff30" opacity="0.59"/><rect x="86.6" y="72.6" width="3.1" height="3.1" fill="#e08800" opacity="0.46"/><rect x="161.2" y="70.1" width="5.3" height="3.0" fill="#ffff30" opacity="0.44"/><rect x="109.1" y="125.2" width="2.5" height="3.1" fill="#f8c000" opacity="0.45"/><rect x="95.6" y="65.5" width="6.9" height="2.6" fill="#e08800" opacity="0.51"/><rect x="74.4" y="141.5" width="2.5" height="5.8" fill="#e89800" opacity="0.61"/><rect x="77.6" y="20.8" width="4.3" height="3.3" fill="#fff000" opacity="0.41"/><rect x="82.6" y="29.9" width="2.3" height="5.3" fill="#e8a000" opacity="0.64"/><rect x="102.3" y="62.1" width="5.1" height="4.0" fill="#e08800" opacity="0.68"/><rect x="33.1" y="52.6" width="6.1" height="4.8" fill="#f8c000" opacity="0.38"/><rect x="147.6" y="102.0" width="7.8" height="3.5" fill="#fff000" opacity="0.57"/><rect x="52.3" y="45.9" width="6.1" height="4.0" fill="#e08800" opacity="0.53"/><rect x="155.1" y="116.7" width="7.4" height="2.4" fill="#f0a000" opacity="0.65"/><rect x="27.9" y="97.6" width="7.1" height="2.9" fill="#f8c000" opacity="0.44"/><rect x="63.2" y="47.4" width="7.1" height="2.3" fill="#ffff30" opacity="0.66"/><rect x="49.1" y="48.2" width="2.5" height="2.6" fill="#ffff30" opacity="0.61"/><rect x="72.0" y="33.7" width="2.8" height="3.9" fill="#fff000" opacity="0.46"/><rect x="63.7" y="34.0" width="6.1" height="3.2" fill="#ffff30" opacity="0.54"/><rect x="67.7" y="92.2" width="7.4" height="2.8" fill="#f0a000" opacity="0.72"/><rect x="140.6" y="92.4" width="6.9" height="5.9" fill="#fff000" opacity="0.75"/><rect x="39.6" y="132.1" width="7.6" height="2.3" fill="#f0a000" opacity="0.41"/><rect x="22.3" y="76.4" width="2.8" height="5.3" fill="#ffff30" opacity="0.70"/><rect x="82.0" y="53.8" width="7.4" height="3.9" fill="#e08800" opacity="0.41"/><rect x="148.7" y="68.6" width="4.4" height="4.9" fill="#e8a000" opacity="0.49"/><rect x="65.3" y="147.6" width="2.0" height="5.0" fill="#e8a000" opacity="0.40"/><rect x="146.6" y="59.8" width="7.4" height="3.2" fill="#d87800" opacity="0.38"/><rect x="40.1" y="129.9" width="2.5" height="5.7" fill="#ffff30" opacity="0.69"/><rect x="88.9" y="103.1" width="6.0" height="4.5" fill="#e89800" opacity="0.45"/><rect x="86.9" y="138.4" width="3.1" height="3.5" fill="#e8a000" opacity="0.70"/><rect x="113.8" y="33.9" width="7.5" height="5.8" fill="#f8c000" opacity="0.64"/><rect x="150.8" y="105.9" width="4.7" height="5.0" fill="#ffff30" opacity="0.54"/><rect x="137.6" y="58.9" width="3.0" height="3.7" fill="#ffff30" opacity="0.47"/><rect x="87.1" y="15.8" width="3.6" height="4.6" fill="#ffff30" opacity="0.54"/><rect x="79.8" y="65.2" width="5.9" height="2.3" fill="#fff000" opacity="0.57"/><rect x="52.2" y="99.1" width="6.6" height="3.7" fill="#f8c000" opacity="0.45"/><rect x="116.5" y="134.9" width="3.9" height="3.5" fill="#f8c000" opacity="0.70"/><rect x="91.9" y="40.6" width="4.5" height="4.1" fill="#e8a000" opacity="0.46"/><rect x="92.7" y="36.0" width="5.4" height="3.4" fill="#f8c000" opacity="0.39"/><rect x="127.7" y="60.0" width="5.9" height="3.7" fill="#ffff30" opacity="0.69"/><rect x="99.4" y="79.4" width="2.2" height="4.8" fill="#fff000" opacity="0.74"/><rect x="72.5" y="88.2" width="7.6" height="5.7" fill="#fff000" opacity="0.74"/><rect x="92.2" y="110.8" width="2.9" height="4.1" fill="#f0a000" opacity="0.73"/><rect x="81.7" y="29.8" width="6.6" height="3.8" fill="#e08800" opacity="0.35"/><rect x="130.4" y="125.7" width="2.2" height="4.9" fill="#e89800" opacity="0.60"/><rect x="45.0" y="78.6" width="6.6" height="2.4" fill="#ffff30" opacity="0.56"/><rect x="53.0" y="64.6" width="3.3" height="4.4" fill="#e08800" opacity="0.56"/><rect x="130.1" y="86.1" width="3.9" height="5.4" fill="#f8c000" opacity="0.54"/><rect x="95.4" y="122.7" width="7.8" height="4.8" fill="#ffff30" opacity="0.37"/><rect x="115.4" y="150.8" width="5.9" height="2.3" fill="#f8c000" opacity="0.62"/><rect x="122.7" y="71.4" width="2.2" height="3.4" fill="#e8a000" opacity="0.49"/><rect x="87.3" y="90.6" width="3.8" height="5.4" fill="#f0a000" opacity="0.43"/><rect x="131.6" y="79.4" width="6.9" height="2.9" fill="#f8c000" opacity="0.46"/><rect x="110.3" y="71.7" width="5.7" height="4.4" fill="#f8c000" opacity="0.54"/><rect x="106.5" y="77.8" width="5.6" height="5.7" fill="#e08800" opacity="0.44"/><rect x="118.8" y="82.6" width="2.3" height="2.2" fill="#e8a000" opacity="0.53"/><rect x="82.4" y="47.7" width="2.7" height="2.3" fill="#e89800" opacity="0.48"/><rect x="119.5" y="151.2" width="6.5" height="2.1" fill="#e8a000" opacity="0.69"/><rect x="139.8" y="82.5" width="2.7" height="2.3" fill="#f0a000" opacity="0.49"/><rect x="116.4" y="80.0" width="7.8" height="2.8" fill="#d87800" opacity="0.66"/><rect x="68.7" y="147.4" width="2.5" height="4.8" fill="#f8c000" opacity="0.50"/><rect x="119.7" y="71.6" width="4.2" height="5.6" fill="#e08800" opacity="0.60"/><rect x="92.7" y="144.1" width="4.4" height="3.5" fill="#fff000" opacity="0.38"/><rect x="124.1" y="69.4" width="6.5" height="5.6" fill="#d87800" opacity="0.50"/><rect x="56.1" y="147.7" width="2.3" height="5.0" fill="#d87800" opacity="0.72"/><rect x="74.0" y="145.6" width="5.6" height="5.2" fill="#f0a000" opacity="0.36"/><rect x="97.0" y="136.5" width="7.7" height="5.8" fill="#e8a000" opacity="0.67"/><rect x="147.8" y="53.3" width="2.8" height="4.0" fill="#e08800" opacity="0.67"/><rect x="87.3" y="21.7" width="6.6" height="4.4" fill="#d87800" opacity="0.69"/><rect x="30.0" y="102.6" width="5.6" height="4.0" fill="#e8a000" opacity="0.65"/><rect x="92.3" y="105.4" width="2.2" height="4.2" fill="#d87800" opacity="0.41"/><rect x="71.0" y="97.4" width="2.4" height="4.5" fill="#f8c000" opacity="0.39"/><rect x="31.2" y="87.6" width="4.7" height="2.9" fill="#e8a000" opacity="0.53"/><rect x="119.1" y="64.9" width="5.2" height="5.1" fill="#f0a000" opacity="0.66"/><rect x="81.6" y="123.7" width="3.6" height="3.0" fill="#ffff30" opacity="0.43"/><rect x="92.6" y="122.8" width="2.9" height="5.5" fill="#f8c000" opacity="0.48"/><rect x="34.9" y="130.7" width="5.0" height="2.9" fill="#f0a000" opacity="0.61"/><rect x="115.1" y="85.7" width="4.8" height="5.3" fill="#fff000" opacity="0.72"/><rect x="129.9" y="96.8" width="2.7" height="2.8" fill="#f8c000" opacity="0.72"/><rect x="45.3" y="135.3" width="4.7" height="3.0" fill="#e08800" opacity="0.39"/><rect x="45.2" y="54.7" width="3.3" height="3.5" fill="#e89800" opacity="0.37"/><rect x="106.1" y="87.0" width="6.4" height="5.7" fill="#e08800" opacity="0.68"/><rect x="55.0" y="110.8" width="5.7" height="2.3" fill="#e08800" opacity="0.67"/><rect x="74.7" y="81.6" width="2.6" height="3.6" fill="#e89800" opacity="0.61"/><rect x="116.5" y="102.8" width="6.2" height="3.6" fill="#ffff30" opacity="0.62"/><rect x="77.8" y="95.1" width="6.5" height="5.5" fill="#e8a000" opacity="0.52"/><rect x="139.4" y="32.7" width="4.2" height="2.8" fill="#e8a000" opacity="0.43"/><rect x="160.5" y="89.5" width="4.5" height="5.3" fill="#e8a000" opacity="0.58"/><rect x="50.1" y="134.7" width="2.8" height="2.2" fill="#e89800" opacity="0.61"/><rect x="110.2" y="75.4" width="5.7" height="3.5" fill="#e89800" opacity="0.41"/><rect x="81.2" y="138.0" width="7.6" height="2.4" fill="#fff000" opacity="0.65"/><rect x="109.0" y="24.5" width="3.8" height="5.3" fill="#e08800" opacity="0.74"/><rect x="75.4" y="88.8" width="7.6" height="3.6" fill="#e89800" opacity="0.61"/><rect x="127.3" y="42.4" width="5.7" height="2.8" fill="#fff000" opacity="0.42"/><rect x="101.1" y="131.7" width="5.1" height="3.5" fill="#f0a000" opacity="0.41"/><rect x="156.1" y="75.1" width="3.2" height="5.5" fill="#e08800" opacity="0.62"/><rect x="71.7" y="127.3" width="4.7" height="5.4" fill="#ffff30" opacity="0.61"/><rect x="79.1" y="120.7" width="4.3" height="3.5" fill="#fff000" opacity="0.42"/><rect x="163.7" y="88.6" width="4.8" height="3.8" fill="#fff000" opacity="0.68"/><rect x="109.0" y="44.6" width="2.4" height="3.4" fill="#d87800" opacity="0.39"/><rect x="43.8" y="105.4" width="2.2" height="4.5" fill="#f0a000" opacity="0.72"/><rect x="68.1" y="143.4" width="2.5" height="5.0" fill="#e8a000" opacity="0.61"/><rect x="94.5" y="75.7" width="2.4" height="4.5" fill="#f0a000" opacity="0.43"/><rect x="142.3" y="81.2" width="7.7" height="5.7" fill="#e89800" opacity="0.62"/><rect x="85.9" y="53.6" width="7.0" height="4.4" fill="#ffff30" opacity="0.41"/><rect x="122.1" y="64.1" width="6.9" height="2.6" fill="#fff000" opacity="0.43"/><rect x="87.9" y="138.2" width="3.9" height="2.1" fill="#e89800" opacity="0.51"/><rect x="67.1" y="58.2" width="4.0" height="3.5" fill="#ffff30" opacity="0.40"/><rect x="35.5" y="76.0" width="4.2" height="5.5" fill="#f0a000" opacity="0.45"/><rect x="26.9" y="72.1" width="6.4" height="3.5" fill="#e8a000" opacity="0.75"/><rect x="53.7" y="66.8" width="6.6" height="3.8" fill="#e89800" opacity="0.60"/><rect x="129.9" y="76.7" width="5.1" height="3.2" fill="#d87800" opacity="0.64"/><rect x="91.4" y="53.0" width="3.7" height="4.5" fill="#e8a000" opacity="0.56"/><rect x="112.8" y="71.0" width="3.4" height="4.6" fill="#e08800" opacity="0.37"/><rect x="55.7" y="70.7" width="5.1" height="4.1" fill="#e8a000" opacity="0.58"/><rect x="64.4" y="69.7" width="5.7" height="3.9" fill="#e89800" opacity="0.36"/><rect x="111.3" y="29.4" width="4.7" height="2.3" fill="#e89800" opacity="0.70"/><rect x="101.2" y="42.2" width="3.6" height="2.0" fill="#d87800" opacity="0.59"/><rect x="42.7" y="60.5" width="5.1" height="4.0" fill="#e89800" opacity="0.71"/><rect x="142.6" y="101.4" width="4.4" height="3.0" fill="#e08800" opacity="0.71"/><rect x="136.7" y="121.6" width="5.9" height="2.8" fill="#e8a000" opacity="0.43"/><rect x="52.0" y="54.7" width="5.8" height="5.3" fill="#e89800" opacity="0.55"/><rect x="144.6" y="109.3" width="8.0" height="4.9" fill="#fff000" opacity="0.64"/><rect x="158.3" y="89.6" width="6.5" height="3.9" fill="#fff000" opacity="0.42"/><rect x="128.9" y="86.2" width="5.9" height="2.5" fill="#ffff30" opacity="0.63"/><rect x="86.6" y="140.5" width="4.6" height="5.2" fill="#ffff30" opacity="0.47"/><rect x="153.5" y="57.4" width="2.5" height="4.0" fill="#e89800" opacity="0.45"/><rect x="97.4" y="149.0" width="7.7" height="5.0" fill="#d87800" opacity="0.43"/><rect x="49.2" y="123.0" width="4.3" height="5.4" fill="#fff000" opacity="0.54"/><rect x="86.3" y="85.9" width="2.2" height="5.8" fill="#f8c000" opacity="0.58"/><rect x="80.2" y="118.1" width="5.7" height="2.3" fill="#e89800" opacity="0.41"/><rect x="115.2" y="91.0" width="7.6" height="3.4" fill="#e89800" opacity="0.63"/><rect x="118.4" y="92.2" width="5.9" height="2.2" fill="#f0a000" opacity="0.64"/><rect x="142.8" y="109.3" width="4.2" height="5.3" fill="#f0a000" opacity="0.70"/><rect x="94.2" y="26.1" width="4.3" height="3.0" fill="#f8c000" opacity="0.39"/><rect x="156.9" y="101.3" width="6.9" height="4.5" fill="#ffff30" opacity="0.54"/><rect x="135.2" y="134.6" width="5.9" height="3.2" fill="#d87800" opacity="0.52"/><rect x="128.3" y="91.8" width="3.7" height="4.9" fill="#d87800" opacity="0.71"/><rect x="98.8" y="31.4" width="4.9" height="3.2" fill="#e08800" opacity="0.67"/><rect x="143.0" y="97.1" width="2.6" height="3.9" fill="#e08800" opacity="0.57"/><rect x="106.0" y="152.6" width="2.5" height="5.3" fill="#e89800" opacity="0.52"/><rect x="53.7" y="81.3" width="6.5" height="2.2" fill="#d87800" opacity="0.55"/><rect x="27.6" y="90.4" width="3.1" height="4.0" fill="#d87800" opacity="0.73"/><rect x="37.4" y="81.8" width="3.0" height="5.3" fill="#f8c000" opacity="0.55"/><rect x="136.4" y="123.7" width="2.5" height="5.2" fill="#f0a000" opacity="0.60"/><rect x="63.8" y="123.0" width="4.4" height="5.6" fill="#f0a000" opacity="0.52"/><rect x="65.2" y="52.1" width="3.8" height="3.7" fill="#e89800" opacity="0.50"/><rect x="118.0" y="63.8" width="4.8" height="4.1" fill="#e08800" opacity="0.49"/><rect x="78.8" y="112.2" width="7.1" height="4.6" fill="#d87800" opacity="0.42"/><rect x="33.1" y="110.8" width="5.5" height="2.5" fill="#fff000" opacity="0.61"/><rect x="75.1" y="38.4" width="3.6" height="5.0" fill="#e89800" opacity="0.64"/><rect x="152.6" y="77.3" width="5.6" height="3.4" fill="#f8c000" opacity="0.48"/><rect x="118.5" y="153.2" width="6.4" height="2.4" fill="#f0a000" opacity="0.43"/><rect x="108.2" y="109.6" width="3.8" height="3.2" fill="#ffff30" opacity="0.43"/><rect x="76.7" y="69.0" width="3.2" height="3.6" fill="#e08800" opacity="0.36"/><rect x="121.1" y="49.2" width="3.3" height="5.9" fill="#ffff30" opacity="0.54"/><rect x="127.3" y="130.6" width="4.4" height="5.0" fill="#e8a000" opacity="0.63"/><rect x="42.5" y="56.7" width="7.1" height="4.7" fill="#f8c000" opacity="0.62"/><rect x="61.4" y="49.2" width="3.9" height="4.5" fill="#f0a000" opacity="0.71"/><rect x="94.2" y="132.6" width="6.3" height="2.6" fill="#e8a000" opacity="0.54"/><rect x="158.4" y="95.2" width="5.1" height="4.6" fill="#e89800" opacity="0.71"/><rect x="88.5" y="93.6" width="7.0" height="5.6" fill="#f0a000" opacity="0.37"/><rect x="64.1" y="79.2" width="6.7" height="5.8" fill="#d87800" opacity="0.39"/><rect x="44.6" y="63.0" width="6.3" height="4.0" fill="#d87800" opacity="0.56"/><rect x="32.6" y="124.5" width="3.3" height="4.7" fill="#e8a000" opacity="0.56"/><rect x="148.2" y="61.7" width="5.7" height="4.6" fill="#ffff30" opacity="0.46"/><rect x="85.3" y="91.9" width="4.5" height="3.7" fill="#d87800" opacity="0.58"/><rect x="122.8" y="112.2" width="4.4" height="5.8" fill="#f8c000" opacity="0.75"/><rect x="139.6" y="75.0" width="3.0" height="5.7" fill="#f0a000" opacity="0.67"/><rect x="59.1" y="50.0" width="5.4" height="2.9" fill="#e89800" opacity="0.49"/><rect x="50.0" y="37.0" width="6.9" height="3.9" fill="#ffff30" opacity="0.65"/><rect x="54.4" y="35.5" width="4.8" height="5.1" fill="#f8c000" opacity="0.46"/><rect x="66.1" y="112.5" width="4.6" height="2.7" fill="#e08800" opacity="0.67"/><rect x="105.1" y="45.8" width="5.9" height="3.3" fill="#fff000" opacity="0.52"/><rect x="53.9" y="42.5" width="4.2" height="5.7" fill="#e8a000" opacity="0.37"/><rect x="124.3" y="26.4" width="6.7" height="2.6" fill="#d87800" opacity="0.60"/><rect x="99.7" y="87.7" width="7.7" height="4.6" fill="#ffff30" opacity="0.59"/><rect x="33.2" y="55.4" width="3.1" height="3.8" fill="#e89800" opacity="0.43"/><rect x="48.8" y="117.4" width="5.7" height="4.8" fill="#f0a000" opacity="0.62"/><rect x="142.4" y="47.4" width="7.0" height="2.8" fill="#f8c000" opacity="0.56"/><rect x="89.6" y="39.2" width="7.3" height="4.2" fill="#ffff30" opacity="0.52"/><rect x="115.1" y="43.0" width="5.3" height="3.9" fill="#e89800" opacity="0.63"/><rect x="92.6" y="116.3" width="5.6" height="4.9" fill="#e89800" opacity="0.69"/><rect x="38.9" y="97.8" width="6.0" height="5.4" fill="#d87800" opacity="0.52"/><rect x="151.4" y="87.0" width="3.1" height="3.4" fill="#e08800" opacity="0.36"/><rect x="151.4" y="104.6" width="8.0" height="5.2" fill="#f0a000" opacity="0.55"/><rect x="23.9" y="93.6" width="2.2" height="4.9" fill="#e89800" opacity="0.49"/><rect x="120.2" y="53.6" width="4.8" height="4.1" fill="#f8c000" opacity="0.46"/><rect x="72.2" y="117.3" width="2.3" height="3.2" fill="#d87800" opacity="0.68"/><rect x="49.8" y="116.1" width="3.6" height="4.0" fill="#f8c000" opacity="0.61"/><rect x="102.8" y="46.9" width="3.9" height="3.2" fill="#f0a000" opacity="0.66"/><rect x="151.4" y="102.3" width="7.3" height="4.2" fill="#e08800" opacity="0.51"/><rect x="104.1" y="96.8" width="6.9" height="3.9" fill="#e08800" opacity="0.67"/><rect x="139.6" y="56.7" width="5.7" height="4.5" fill="#f0a000" opacity="0.44"/><rect x="67.7" y="44.6" width="6.6" height="2.4" fill="#e89800" opacity="0.70"/><rect x="71.8" y="97.8" width="7.6" height="2.1" fill="#e89800" opacity="0.66"/><rect x="58.1" y="73.1" width="3.8" height="3.7" fill="#d87800" opacity="0.36"/><rect x="41.8" y="64.8" width="7.5" height="4.0" fill="#e08800" opacity="0.68"/><rect x="99.0" y="40.7" width="6.2" height="3.6" fill="#f0a000" opacity="0.36"/><rect x="49.8" y="123.2" width="7.6" height="5.9" fill="#fff000" opacity="0.66"/><rect x="72.2" y="80.7" width="4.8" height="5.6" fill="#e08800" opacity="0.52"/><rect x="151.0" y="90.5" width="7.9" height="5.4" fill="#f8c000" opacity="0.70"/><rect x="98.6" y="94.0" width="6.3" height="3.0" fill="#e89800" opacity="0.72"/><rect x="50.5" y="133.6" width="6.2" height="2.6" fill="#f0a000" opacity="0.47"/><rect x="44.3" y="69.0" width="6.0" height="5.6" fill="#e08800" opacity="0.64"/><rect x="100.7" y="87.6" width="5.9" height="5.3" fill="#f0a000" opacity="0.51"/><rect x="70.6" y="138.7" width="7.7" height="5.3" fill="#e08800" opacity="0.48"/><rect x="150.4" y="67.5" width="4.8" height="2.7" fill="#f0a000" opacity="0.50"/><rect x="56.9" y="41.8" width="4.5" height="3.5" fill="#fff000" opacity="0.73"/><rect x="103.7" y="33.9" width="3.8" height="2.2" fill="#d87800" opacity="0.70"/><rect x="90.6" y="78.1" width="2.9" height="5.3" fill="#e8a000" opacity="0.74"/><rect x="93.1" y="131.9" width="4.3" height="5.1" fill="#f8c000" opacity="0.67"/><rect x="91.4" y="89.9" width="3.6" height="3.7" fill="#e08800" opacity="0.47"/><rect x="135.2" y="139.7" width="8.0" height="2.6" fill="#fff000" opacity="0.49"/><rect x="138.2" y="114.4" width="6.8" height="2.8" fill="#f8c000" opacity="0.47"/><rect x="134.5" y="103.1" width="6.3" height="5.7" fill="#e08800" opacity="0.67"/><rect x="71.3" y="92.4" width="6.8" height="5.1" fill="#f8c000" opacity="0.51"/><rect x="55.5" y="82.2" width="7.0" height="3.3" fill="#f8c000" opacity="0.43"/><rect x="102.9" y="115.7" width="6.2" height="3.5" fill="#d87800" opacity="0.51"/><rect x="64.3" y="84.0" width="2.3" height="6.0" fill="#d87800" opacity="0.70"/><rect x="58.0" y="122.5" width="2.5" height="3.3" fill="#e08800" opacity="0.49"/><rect x="81.7" y="85.7" width="2.2" height="6.0" fill="#fff000" opacity="0.58"/><rect x="107.8" y="154.6" width="3.7" height="2.4" fill="#fff000" opacity="0.66"/><rect x="121.7" y="22.7" width="3.5" height="2.2" fill="#f8c000" opacity="0.75"/><rect x="83.4" y="95.3" width="2.2" height="3.5" fill="#fff000" opacity="0.54"/><rect x="130.6" y="30.7" width="7.2" height="4.6" fill="#f0a000" opacity="0.63"/><rect x="126.4" y="108.8" width="3.4" height="2.4" fill="#e8a000" opacity="0.42"/><rect x="117.8" y="51.4" width="3.4" height="4.9" fill="#e89800" opacity="0.37"/><rect x="90.4" y="129.8" width="7.4" height="5.6" fill="#e08800" opacity="0.45"/><rect x="30.1" y="81.8" width="6.6" height="3.9" fill="#f0a000" opacity="0.41"/><rect x="94.2" y="17.1" width="6.1" height="3.2" fill="#fff000" opacity="0.65"/><rect x="124.4" y="112.3" width="3.5" height="2.5" fill="#fff000" opacity="0.50"/><rect x="31.5" y="110.4" width="7.5" height="5.6" fill="#fff000" opacity="0.64"/><rect x="96.6" y="99.9" width="7.6" height="2.9" fill="#d87800" opacity="0.71"/><rect x="122.8" y="124.2" width="2.6" height="5.7" fill="#e08800" opacity="0.60"/><rect x="51.8" y="99.4" width="6.9" height="3.9" fill="#d87800" opacity="0.41"/><rect x="95.0" y="103.9" width="6.3" height="4.2" fill="#e89800" opacity="0.53"/><rect x="119.6" y="124.7" width="3.5" height="2.1" fill="#ffff30" opacity="0.48"/><rect x="117.0" y="131.0" width="3.9" height="5.6" fill="#f0a000" opacity="0.41"/><rect x="34.9" y="82.2" width="6.7" height="5.7" fill="#fff000" opacity="0.68"/><rect x="137.9" y="129.7" width="7.8" height="3.7" fill="#ffff30" opacity="0.75"/><rect x="112.1" y="76.8" width="3.7" height="5.6" fill="#e08800" opacity="0.68"/><rect x="119.2" y="83.3" width="5.8" height="3.8" fill="#d87800" opacity="0.55"/><rect x="31.9" y="109.5" width="7.7" height="3.1" fill="#d87800" opacity="0.52"/><rect x="120.7" y="69.3" width="5.4" height="2.6" fill="#e89800" opacity="0.56"/><rect x="95.7" y="117.0" width="5.6" height="5.3" fill="#fff000" opacity="0.65"/><rect x="104.1" y="110.8" width="6.0" height="4.5" fill="#f8c000" opacity="0.58"/><rect x="97.5" y="104.7" width="6.4" height="3.6" fill="#e08800" opacity="0.56"/><rect x="69.9" y="118.3" width="5.8" height="5.8" fill="#f0a000" opacity="0.36"/><rect x="134.1" y="60.3" width="7.2" height="3.1" fill="#e89800" opacity="0.58"/><rect x="105.8" y="85.8" width="6.2" height="4.3" fill="#e08800" opacity="0.49"/><rect x="156.7" y="57.6" width="2.4" height="3.4" fill="#f8c000" opacity="0.68"/><rect x="119.1" y="56.4" width="6.3" height="3.5" fill="#e08800" opacity="0.47"/><rect x="140.1" y="125.7" width="4.7" height="2.1" fill="#e89800" opacity="0.36"/><rect x="125.4" y="80.1" width="3.1" height="2.4" fill="#ffff30" opacity="0.57"/><rect x="101.7" y="84.2" width="7.6" height="5.0" fill="#ffff30" opacity="0.36"/><rect x="47.5" y="54.9" width="5.1" height="4.8" fill="#f0a000" opacity="0.49"/><rect x="117.4" y="104.0" width="3.6" height="3.9" fill="#ffff30" opacity="0.39"/><rect x="141.0" y="134.0" width="5.2" height="2.9" fill="#f8c000" opacity="0.41"/><rect x="36.0" y="59.4" width="3.0" height="5.3" fill="#e8a000" opacity="0.63"/><rect x="46.0" y="54.9" width="2.2" height="5.9" fill="#e08800" opacity="0.66"/><rect x="73.3" y="117.1" width="4.0" height="3.7" fill="#d87800" opacity="0.68"/><rect x="101.6" y="73.3" width="5.1" height="5.8" fill="#d87800" opacity="0.45"/><rect x="41.3" y="114.0" width="4.2" height="4.1" fill="#f0a000" opacity="0.48"/><rect x="110.0" y="143.3" width="3.4" height="3.7" fill="#e8a000" opacity="0.66"/><rect x="145.0" y="64.8" width="6.9" height="5.5" fill="#e08800" opacity="0.36"/><rect x="68.6" y="58.1" width="6.1" height="3.1" fill="#e08800" opacity="0.60"/><rect x="91.8" y="139.1" width="4.6" height="5.8" fill="#ffff30" opacity="0.40"/><rect x="75.0" y="111.1" width="2.4" height="5.8" fill="#ffff30" opacity="0.38"/><rect x="33.2" y="49.6" width="4.6" height="4.0" fill="#ffff30" opacity="0.72"/><rect x="58.6" y="69.3" width="6.4" height="5.0" fill="#ffff30" opacity="0.69"/><rect x="50.0" y="52.3" width="5.9" height="2.8" fill="#d87800" opacity="0.53"/><rect x="38.0" y="70.2" width="4.8" height="3.2" fill="#f8c000" opacity="0.48"/><rect x="112.0" y="136.5" width="7.8" height="3.6" fill="#d87800" opacity="0.41"/><rect x="131.2" y="74.8" width="4.0" height="3.1" fill="#f8c000" opacity="0.47"/><rect x="96.0" y="58.5" width="2.4" height="5.5" fill="#fff000" opacity="0.61"/><rect x="26.4" y="80.0" width="4.1" height="5.1" fill="#f8c000" opacity="0.75"/><rect x="61.4" y="24.3" width="4.5" height="4.7" fill="#e89800" opacity="0.62"/><rect x="42.4" y="42.6" width="6.9" height="4.1" fill="#fff000" opacity="0.46"/><rect x="52.9" y="45.0" width="6.2" height="3.7" fill="#f0a000" opacity="0.35"/><rect x="97.4" y="32.0" width="5.0" height="5.9" fill="#e89800" opacity="0.52"/><rect x="106.2" y="21.1" width="5.6" height="3.5" fill="#fff000" opacity="0.63"/><rect x="81.8" y="128.7" width="4.1" height="4.1" fill="#e8a000" opacity="0.61"/><rect x="154.3" y="89.6" width="7.9" height="3.5" fill="#ffff30" opacity="0.42"/><rect x="82.8" y="112.9" width="5.5" height="4.3" fill="#f0a000" opacity="0.68"/><rect x="57.7" y="149.3" width="5.6" height="3.0" fill="#d87800" opacity="0.43"/><rect x="30.3" y="117.7" width="2.1" height="2.2" fill="#fff000" opacity="0.47"/><rect x="52.7" y="77.8" width="5.7" height="3.7" fill="#e8a000" opacity="0.51"/><rect x="57.1" y="130.4" width="4.1" height="5.8" fill="#f0a000" opacity="0.56"/><rect x="127.9" y="112.7" width="4.4" height="4.2" fill="#e89800" opacity="0.70"/><rect x="141.1" y="75.8" width="4.6" height="4.5" fill="#d87800" opacity="0.63"/><rect x="91.5" y="65.1" width="4.2" height="3.5" fill="#f0a000" opacity="0.68"/><rect x="68.1" y="85.1" width="7.4" height="4.8" fill="#e8a000" opacity="0.60"/><rect x="27.5" y="77.2" width="3.2" height="5.6" fill="#e8a000" opacity="0.42"/><rect x="53.6" y="46.1" width="4.1" height="6.0" fill="#e08800" opacity="0.63"/><rect x="95.8" y="87.3" width="6.3" height="4.2" fill="#ffff30" opacity="0.51"/><rect x="99.3" y="92.2" width="2.2" height="2.7" fill="#ffff30" opacity="0.70"/><rect x="133.0" y="55.4" width="2.9" height="2.8" fill="#f0a000" opacity="0.41"/><rect x="40.8" y="81.0" width="2.2" height="2.3" fill="#fff000" opacity="0.68"/><rect x="42.8" y="44.7" width="2.4" height="2.0" fill="#d87800" opacity="0.41"/><rect x="94.8" y="124.8" width="2.2" height="4.5" fill="#f0a000" opacity="0.49"/><rect x="49.4" y="100.9" width="2.3" height="5.6" fill="#e08800" opacity="0.53"/><rect x="65.7" y="62.3" width="2.3" height="5.7" fill="#e89800" opacity="0.48"/><rect x="144.5" y="48.3" width="3.8" height="4.4" fill="#fff000" opacity="0.74"/><rect x="146.2" y="111.5" width="6.0" height="4.3" fill="#e8a000" opacity="0.47"/><rect x="127.6" y="51.5" width="6.8" height="3.0" fill="#e89800" opacity="0.42"/><rect x="87.4" y="91.3" width="7.3" height="3.6" fill="#d87800" opacity="0.40"/><rect x="48.2" y="77.6" width="4.4" height="2.3" fill="#f0a000" opacity="0.52"/><rect x="137.9" y="59.1" width="4.3" height="3.9" fill="#d87800" opacity="0.44"/><rect x="149.4" y="99.8" width="4.0" height="2.6" fill="#e89800" opacity="0.39"/><rect x="83.9" y="152.5" width="2.8" height="3.8" fill="#f8c000" opacity="0.41"/><rect x="55.0" y="136.0" width="4.3" height="5.8" fill="#f8c000" opacity="0.47"/><rect x="59.7" y="91.9" width="7.2" height="4.7" fill="#ffff30" opacity="0.59"/><rect x="25.1" y="113.3" width="5.2" height="3.6" fill="#f8c000" opacity="0.40"/><rect x="92.3" y="27.6" width="2.5" height="5.4" fill="#e8a000" opacity="0.36"/><rect x="86.5" y="60.0" width="2.1" height="4.8" fill="#e89800" opacity="0.66"/><rect x="95.6" y="118.1" width="7.3" height="2.3" fill="#d87800" opacity="0.67"/><rect x="93.7" y="55.3" width="6.3" height="2.4" fill="#ffff30" opacity="0.40"/><rect x="84.0" y="49.5" width="4.4" height="5.6" fill="#e89800" opacity="0.72"/><rect x="111.5" y="126.1" width="6.8" height="4.8" fill="#e8a000" opacity="0.36"/><rect x="77.9" y="39.9" width="8.0" height="3.6" fill="#f0a000" opacity="0.42"/><rect x="143.7" y="132.7" width="6.4" height="4.9" fill="#e08800" opacity="0.51"/><rect x="55.2" y="57.1" width="6.5" height="2.6" fill="#e08800" opacity="0.57"/><rect x="43.9" y="36.1" width="5.4" height="2.9" fill="#fff000" opacity="0.64"/><rect x="90.6" y="134.6" width="6.1" height="3.4" fill="#e08800" opacity="0.39"/><rect x="97.0" y="28.8" width="7.4" height="5.5" fill="#e08800" opacity="0.74"/><rect x="86.2" y="74.4" width="3.9" height="5.1" fill="#d87800" opacity="0.65"/><rect x="143.6" y="118.0" width="4.4" height="5.0" fill="#f8c000" opacity="0.46"/><rect x="151.3" y="124.6" width="4.5" height="5.7" fill="#fff000" opacity="0.55"/><rect x="77.4" y="57.7" width="6.0" height="5.4" fill="#e89800" opacity="0.55"/><rect x="118.2" y="152.4" width="7.0" height="4.2" fill="#e89800" opacity="0.57"/><rect x="148.6" y="76.0" width="5.3" height="3.0" fill="#e08800" opacity="0.42"/><rect x="79.4" y="105.0" width="5.8" height="2.5" fill="#fff000" opacity="0.62"/><rect x="94.7" y="122.4" width="5.1" height="3.8" fill="#d87800" opacity="0.63"/><rect x="132.6" y="132.2" width="5.5" height="3.0" fill="#f0a000" opacity="0.57"/><rect x="94.0" y="57.4" width="6.0" height="4.4" fill="#fff000" opacity="0.69"/><rect x="64.7" y="105.2" width="6.1" height="2.0" fill="#fff000" opacity="0.43"/><rect x="127.5" y="101.2" width="3.2" height="4.8" fill="#fff000" opacity="0.74"/><rect x="117.5" y="127.9" width="5.4" height="3.2" fill="#f0a000" opacity="0.37"/><rect x="21.9" y="101.0" width="4.9" height="5.0" fill="#d87800" opacity="0.74"/><rect x="70.1" y="77.7" width="4.9" height="3.7" fill="#f8c000" opacity="0.66"/><rect x="73.1" y="125.9" width="2.5" height="3.1" fill="#ffff30" opacity="0.61"/><rect x="147.0" y="116.4" width="2.2" height="3.6" fill="#e89800" opacity="0.47"/><rect x="114.7" y="140.0" width="7.1" height="5.7" fill="#e89800" opacity="0.39"/><rect x="84.2" y="47.5" width="5.7" height="3.5" fill="#d87800" opacity="0.48"/><rect x="55.7" y="126.4" width="4.2" height="5.3" fill="#f8c000" opacity="0.37"/><rect x="142.6" y="127.4" width="7.5" height="6.0" fill="#e8a000" opacity="0.71"/><rect x="139.8" y="69.8" width="5.0" height="2.6" fill="#ffff30" opacity="0.59"/><rect x="73.0" y="67.6" width="3.4" height="2.6" fill="#e8a000" opacity="0.39"/><rect x="138.4" y="98.9" width="3.1" height="4.9" fill="#e08800" opacity="0.36"/><rect x="41.4" y="44.7" width="5.1" height="2.6" fill="#f0a000" opacity="0.61"/><rect x="45.3" y="82.7" width="4.0" height="3.8" fill="#e89800" opacity="0.71"/><rect x="112.1" y="120.7" width="4.7" height="4.3" fill="#d87800" opacity="0.58"/><rect x="39.8" y="97.3" width="5.1" height="3.7" fill="#e89800" opacity="0.74"/><rect x="147.2" y="73.5" width="6.9" height="2.2" fill="#d87800" opacity="0.59"/><rect x="76.1" y="139.2" width="7.7" height="3.9" fill="#e89800" opacity="0.47"/><rect x="54.4" y="143.6" width="2.2" height="2.8" fill="#fff000" opacity="0.63"/><rect x="125.1" y="130.8" width="5.3" height="5.8" fill="#d87800" opacity="0.56"/><rect x="50.3" y="69.0" width="2.7" height="2.7" fill="#f8c000" opacity="0.57"/><rect x="143.0" y="130.5" width="3.5" height="2.4" fill="#ffff30" opacity="0.63"/><rect x="99.0" y="135.4" width="5.2" height="4.8" fill="#f0a000" opacity="0.69"/><rect x="64.3" y="28.6" width="2.8" height="4.0" fill="#f0a000" opacity="0.60"/><rect x="142.2" y="74.2" width="4.8" height="4.7" fill="#e89800" opacity="0.74"/><rect x="109.8" y="133.5" width="2.6" height="3.5" fill="#e08800" opacity="0.51"/><rect x="106.1" y="91.3" width="6.2" height="5.8" fill="#fff000" opacity="0.47"/><path d="M40 40 L80 60" stroke="#e08800" stroke-width="5" opacity=".4"/><path d="M110 55 L140 70" stroke="#e08800" stroke-width="5" opacity=".4"/><path d="M45 85 L60 120" stroke="#e08800" stroke-width="5" opacity=".4"/><path d="M80 120 L130 100" stroke="#e08800" stroke-width="5" opacity=".4"/><path d="M135 85 L150 120" stroke="#e08800" stroke-width="5" opacity=".4"/><path d="M60 140 L90 150" stroke="#e08800" stroke-width="5" opacity=".4"/><path d="M95 35 L120 40" stroke="#e08800" stroke-width="5" opacity=".4"/><ellipse cx="94" cy="80" rx="22" ry="13" fill="#ffffa0" opacity=".85"/><ellipse cx="94" cy="80" rx="13" ry="7" fill="#ffffff"/><ellipse cx="98" cy="104" rx="5" ry="3" fill="#ffffd0"/><ellipse cx="143" cy="108" rx="10" ry="5" fill="#ffffb0" transform="rotate(-45 143 108)"/><ellipse cx="143" cy="108" rx="5" ry="2.5" fill="#fff" transform="rotate(-45 143 108)"/></svg>
</div>
</body></html>
